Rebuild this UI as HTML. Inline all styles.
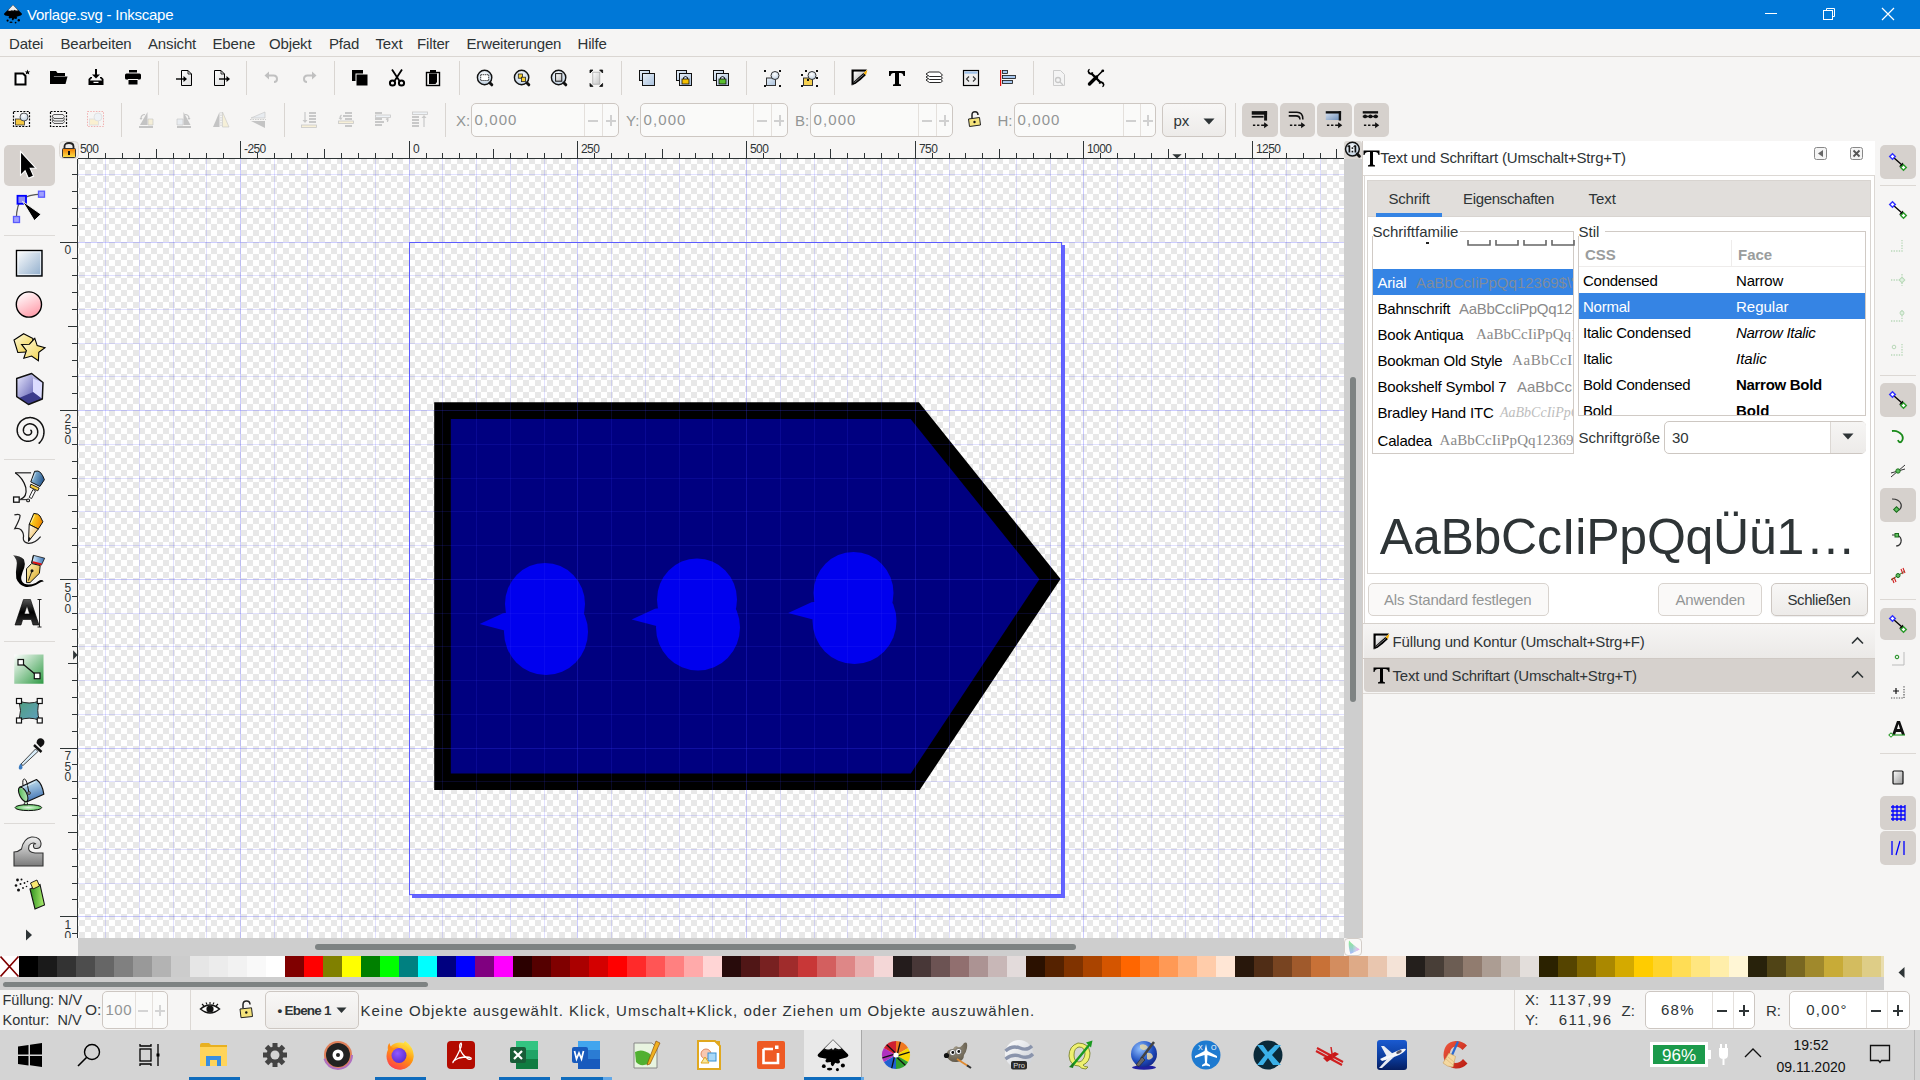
<!DOCTYPE html><html><head><meta charset="utf-8"><title>Vorlage.svg - Inkscape</title><style>html,body{margin:0;padding:0;}body{width:1920px;height:1080px;overflow:hidden;position:relative;background:#f6f5f4;font-family:"Liberation Sans",sans-serif;}</style></head><body>
<div style="position:absolute;left:0px;top:0px;width:1920px;height:29px;background:#0078d7;"></div>
<svg style="position:absolute;left:3px;top:4px;" width="20" height="20" viewBox="0 0 20 20"><defs><linearGradient id="lg_t" x1="0" y1="0" x2="0" y2="1"><stop offset="0" stop-color="#5a5a5a"/><stop offset="0.45" stop-color="#000"/></linearGradient></defs><path d="M10 0.8 L1.2 9.6 Q0.4 10.9 2.2 11.4 L6.2 12.2 Q4.8 13.8 6.4 14.4 L8.8 14.1 Q8.3 16.2 10 16.6 L11.3 14.6 Q13.3 15.6 14.2 14.1 L13.6 12.7 L17.8 11.4 Q19.6 10.9 18.8 9.6 Z" fill="url(#lg_t)"/><path d="M10 1.2 L5 6.2 Q7.5 7.4 9.2 6 L10 7 L11.2 5.8 Q13 7.2 15 6.2 Z" fill="#fff" opacity="0.92"/><circle cx="4.6" cy="16.6" r="1.1" fill="#000"/><circle cx="15.8" cy="16.2" r="1.2" fill="#000"/><circle cx="12.6" cy="18.6" r="0.9" fill="#000"/><ellipse cx="8" cy="18.3" rx="1.6" ry="0.8" fill="#000"/></svg>
<div style="position:absolute;top:7.30px;font-size:15px;line-height:15px;color:#ffffff;font-family:'Liberation Sans', sans-serif;white-space:nowrap;left:27px;letter-spacing:-0.25px;">Vorlage.svg - Inkscape</div>
<div style="position:absolute;left:1765px;top:13px;width:12px;height:1px;background:#fff;"></div>
<svg style="position:absolute;left:1820px;top:6px;" width="18" height="16" viewBox="0 0 18 16"><rect x="3.5" y="4.5" width="9" height="9" fill="none" stroke="#fff" stroke-width="1"/><path d="M6.5 4.5 V2.5 H14.5 V10.5 H12.5" fill="none" stroke="#fff" stroke-width="1"/></svg>
<svg style="position:absolute;left:1881px;top:7px;" width="14" height="14" viewBox="0 0 14 14"><path d="M1 1 L13 13 M13 1 L1 13" stroke="#fff" stroke-width="1.2"/></svg>
<div style="position:absolute;left:0px;top:56px;width:1920px;height:1px;background:#dad6d2;"></div>
<div style="position:absolute;top:36.30px;font-size:15px;line-height:15px;color:#2e3436;font-family:'Liberation Sans', sans-serif;white-space:nowrap;left:9px;letter-spacing:-0.15px;">Datei</div>
<div style="position:absolute;top:36.30px;font-size:15px;line-height:15px;color:#2e3436;font-family:'Liberation Sans', sans-serif;white-space:nowrap;left:60.5px;letter-spacing:-0.15px;">Bearbeiten</div>
<div style="position:absolute;top:36.30px;font-size:15px;line-height:15px;color:#2e3436;font-family:'Liberation Sans', sans-serif;white-space:nowrap;left:148px;letter-spacing:-0.15px;">Ansicht</div>
<div style="position:absolute;top:36.30px;font-size:15px;line-height:15px;color:#2e3436;font-family:'Liberation Sans', sans-serif;white-space:nowrap;left:212.5px;letter-spacing:-0.15px;">Ebene</div>
<div style="position:absolute;top:36.30px;font-size:15px;line-height:15px;color:#2e3436;font-family:'Liberation Sans', sans-serif;white-space:nowrap;left:269px;letter-spacing:-0.15px;">Objekt</div>
<div style="position:absolute;top:36.30px;font-size:15px;line-height:15px;color:#2e3436;font-family:'Liberation Sans', sans-serif;white-space:nowrap;left:329px;letter-spacing:-0.15px;">Pfad</div>
<div style="position:absolute;top:36.30px;font-size:15px;line-height:15px;color:#2e3436;font-family:'Liberation Sans', sans-serif;white-space:nowrap;left:375.5px;letter-spacing:-0.15px;">Text</div>
<div style="position:absolute;top:36.30px;font-size:15px;line-height:15px;color:#2e3436;font-family:'Liberation Sans', sans-serif;white-space:nowrap;left:417px;letter-spacing:-0.15px;">Filter</div>
<div style="position:absolute;top:36.30px;font-size:15px;line-height:15px;color:#2e3436;font-family:'Liberation Sans', sans-serif;white-space:nowrap;left:466.5px;letter-spacing:-0.15px;">Erweiterungen</div>
<div style="position:absolute;top:36.30px;font-size:15px;line-height:15px;color:#2e3436;font-family:'Liberation Sans', sans-serif;white-space:nowrap;left:577.5px;letter-spacing:-0.15px;">Hilfe</div>
<svg style="position:absolute;left:78px;top:159px;" width="1266" height="779" viewBox="0 0 1266 779"><defs><pattern id="chk" patternUnits="userSpaceOnUse" x="1" y="158" width="12" height="12"><rect width="12" height="12" fill="#ffffff"/><rect x="0" y="0" width="6" height="6" fill="#e8e8e8"/><rect x="6" y="6" width="6" height="6" fill="#e8e8e8"/></pattern></defs><g transform="translate(-78,-159)"><rect x="78" y="159" width="1266" height="779" fill="url(#chk)"/><polygon points="434.2,402.2 918.9,402.2 1060.6,579 919.7,789.9 434.2,789.9" fill="#000"/><polygon points="450.8,419 910.6,419 1039.4,579.2 910.8,773.4 450.8,773.4" fill="#000080"/><g transform="translate(0,0)"><g fill="#0000ee"><ellipse cx="545" cy="604" rx="40" ry="41"/><ellipse cx="546" cy="632" rx="42" ry="43"/><polygon points="479.7,624.1 503,613.2 512,612 512,631 504.5,630.6"/></g></g><g transform="translate(152,-4.5)"><g fill="#0000ee"><ellipse cx="545" cy="604" rx="40" ry="41"/><ellipse cx="546" cy="632" rx="42" ry="43"/><polygon points="479.7,624.1 503,613.2 512,612 512,631 504.5,630.6"/></g></g><g transform="translate(308.5,-11)"><g fill="#0000ee"><ellipse cx="545" cy="604" rx="40" ry="41"/><ellipse cx="546" cy="632" rx="42" ry="43"/><polygon points="479.7,624.1 503,613.2 512,612 512,631 504.5,630.6"/></g></g><rect x="105" y="159" width="1" height="779" fill="#3f3fff" fill-opacity="0.15"/><rect x="139" y="159" width="1" height="779" fill="#3f3fff" fill-opacity="0.15"/><rect x="173" y="159" width="1" height="779" fill="#3f3fff" fill-opacity="0.15"/><rect x="206" y="159" width="1" height="779" fill="#3f3fff" fill-opacity="0.15"/><rect x="240" y="159" width="1" height="779" fill="#3f3fff" fill-opacity="0.26"/><rect x="274" y="159" width="1" height="779" fill="#3f3fff" fill-opacity="0.15"/><rect x="307" y="159" width="1" height="779" fill="#3f3fff" fill-opacity="0.15"/><rect x="341" y="159" width="1" height="779" fill="#3f3fff" fill-opacity="0.15"/><rect x="375" y="159" width="1" height="779" fill="#3f3fff" fill-opacity="0.15"/><rect x="409" y="159" width="1" height="779" fill="#3f3fff" fill-opacity="0.26"/><rect x="442" y="159" width="1" height="779" fill="#3f3fff" fill-opacity="0.15"/><rect x="476" y="159" width="1" height="779" fill="#3f3fff" fill-opacity="0.15"/><rect x="510" y="159" width="1" height="779" fill="#3f3fff" fill-opacity="0.15"/><rect x="544" y="159" width="1" height="779" fill="#3f3fff" fill-opacity="0.15"/><rect x="577" y="159" width="1" height="779" fill="#3f3fff" fill-opacity="0.26"/><rect x="611" y="159" width="1" height="779" fill="#3f3fff" fill-opacity="0.15"/><rect x="645" y="159" width="1" height="779" fill="#3f3fff" fill-opacity="0.15"/><rect x="679" y="159" width="1" height="779" fill="#3f3fff" fill-opacity="0.15"/><rect x="712" y="159" width="1" height="779" fill="#3f3fff" fill-opacity="0.15"/><rect x="746" y="159" width="1" height="779" fill="#3f3fff" fill-opacity="0.26"/><rect x="780" y="159" width="1" height="779" fill="#3f3fff" fill-opacity="0.15"/><rect x="814" y="159" width="1" height="779" fill="#3f3fff" fill-opacity="0.15"/><rect x="847" y="159" width="1" height="779" fill="#3f3fff" fill-opacity="0.15"/><rect x="881" y="159" width="1" height="779" fill="#3f3fff" fill-opacity="0.15"/><rect x="915" y="159" width="1" height="779" fill="#3f3fff" fill-opacity="0.26"/><rect x="949" y="159" width="1" height="779" fill="#3f3fff" fill-opacity="0.15"/><rect x="982" y="159" width="1" height="779" fill="#3f3fff" fill-opacity="0.15"/><rect x="1016" y="159" width="1" height="779" fill="#3f3fff" fill-opacity="0.15"/><rect x="1050" y="159" width="1" height="779" fill="#3f3fff" fill-opacity="0.15"/><rect x="1083" y="159" width="1" height="779" fill="#3f3fff" fill-opacity="0.26"/><rect x="1117" y="159" width="1" height="779" fill="#3f3fff" fill-opacity="0.15"/><rect x="1151" y="159" width="1" height="779" fill="#3f3fff" fill-opacity="0.15"/><rect x="1185" y="159" width="1" height="779" fill="#3f3fff" fill-opacity="0.15"/><rect x="1218" y="159" width="1" height="779" fill="#3f3fff" fill-opacity="0.15"/><rect x="1252" y="159" width="1" height="779" fill="#3f3fff" fill-opacity="0.26"/><rect x="1286" y="159" width="1" height="779" fill="#3f3fff" fill-opacity="0.15"/><rect x="1320" y="159" width="1" height="779" fill="#3f3fff" fill-opacity="0.15"/><rect x="78" y="174" width="1266" height="1" fill="#3f3fff" fill-opacity="0.15"/><rect x="78" y="208" width="1266" height="1" fill="#3f3fff" fill-opacity="0.15"/><rect x="78" y="242" width="1266" height="1" fill="#3f3fff" fill-opacity="0.26"/><rect x="78" y="275" width="1266" height="1" fill="#3f3fff" fill-opacity="0.15"/><rect x="78" y="309" width="1266" height="1" fill="#3f3fff" fill-opacity="0.15"/><rect x="78" y="343" width="1266" height="1" fill="#3f3fff" fill-opacity="0.15"/><rect x="78" y="376" width="1266" height="1" fill="#3f3fff" fill-opacity="0.15"/><rect x="78" y="410" width="1266" height="1" fill="#3f3fff" fill-opacity="0.26"/><rect x="78" y="444" width="1266" height="1" fill="#3f3fff" fill-opacity="0.15"/><rect x="78" y="478" width="1266" height="1" fill="#3f3fff" fill-opacity="0.15"/><rect x="78" y="511" width="1266" height="1" fill="#3f3fff" fill-opacity="0.15"/><rect x="78" y="545" width="1266" height="1" fill="#3f3fff" fill-opacity="0.15"/><rect x="78" y="579" width="1266" height="1" fill="#3f3fff" fill-opacity="0.26"/><rect x="78" y="613" width="1266" height="1" fill="#3f3fff" fill-opacity="0.15"/><rect x="78" y="646" width="1266" height="1" fill="#3f3fff" fill-opacity="0.15"/><rect x="78" y="680" width="1266" height="1" fill="#3f3fff" fill-opacity="0.15"/><rect x="78" y="714" width="1266" height="1" fill="#3f3fff" fill-opacity="0.15"/><rect x="78" y="748" width="1266" height="1" fill="#3f3fff" fill-opacity="0.26"/><rect x="78" y="781" width="1266" height="1" fill="#3f3fff" fill-opacity="0.15"/><rect x="78" y="815" width="1266" height="1" fill="#3f3fff" fill-opacity="0.15"/><rect x="78" y="849" width="1266" height="1" fill="#3f3fff" fill-opacity="0.15"/><rect x="78" y="883" width="1266" height="1" fill="#3f3fff" fill-opacity="0.15"/><rect x="78" y="916" width="1266" height="1" fill="#3f3fff" fill-opacity="0.26"/><rect x="409" y="242" width="653" height="1" fill="#5c5cff"/><rect x="409" y="242" width="1" height="653" fill="#5c5cff"/><rect x="1061" y="242" width="1" height="656" fill="#5c5cff"/><rect x="409" y="894" width="656" height="1" fill="#5c5cff"/><rect x="1062" y="245" width="3" height="653" fill="#6464ff"/><rect x="412" y="895" width="653" height="3" fill="#6464ff"/></g></svg>
<svg style="position:absolute;left:0px;top:0px;pointer-events:none;" width="1920" height="1080" viewBox="0 0 1920 1080"><rect x="78" y="158" width="1266" height="1" fill="#2e3436"/><rect x="88" y="153" width="1" height="5" fill="#2e3436"/><rect x="105" y="153" width="1" height="5" fill="#2e3436"/><rect x="122" y="153" width="1" height="5" fill="#2e3436"/><rect x="139" y="153" width="1" height="5" fill="#2e3436"/><rect x="156" y="149" width="1" height="9" fill="#2e3436"/><rect x="173" y="153" width="1" height="5" fill="#2e3436"/><rect x="189" y="153" width="1" height="5" fill="#2e3436"/><rect x="206" y="153" width="1" height="5" fill="#2e3436"/><rect x="223" y="153" width="1" height="5" fill="#2e3436"/><rect x="240" y="141" width="1" height="17" fill="#2e3436"/><rect x="257" y="153" width="1" height="5" fill="#2e3436"/><rect x="274" y="153" width="1" height="5" fill="#2e3436"/><rect x="291" y="153" width="1" height="5" fill="#2e3436"/><rect x="307" y="153" width="1" height="5" fill="#2e3436"/><rect x="324" y="149" width="1" height="9" fill="#2e3436"/><rect x="341" y="153" width="1" height="5" fill="#2e3436"/><rect x="358" y="153" width="1" height="5" fill="#2e3436"/><rect x="375" y="153" width="1" height="5" fill="#2e3436"/><rect x="392" y="153" width="1" height="5" fill="#2e3436"/><rect x="409" y="141" width="1" height="17" fill="#2e3436"/><rect x="426" y="153" width="1" height="5" fill="#2e3436"/><rect x="442" y="153" width="1" height="5" fill="#2e3436"/><rect x="459" y="153" width="1" height="5" fill="#2e3436"/><rect x="476" y="153" width="1" height="5" fill="#2e3436"/><rect x="493" y="149" width="1" height="9" fill="#2e3436"/><rect x="510" y="153" width="1" height="5" fill="#2e3436"/><rect x="527" y="153" width="1" height="5" fill="#2e3436"/><rect x="544" y="153" width="1" height="5" fill="#2e3436"/><rect x="561" y="153" width="1" height="5" fill="#2e3436"/><rect x="577" y="141" width="1" height="17" fill="#2e3436"/><rect x="594" y="153" width="1" height="5" fill="#2e3436"/><rect x="611" y="153" width="1" height="5" fill="#2e3436"/><rect x="628" y="153" width="1" height="5" fill="#2e3436"/><rect x="645" y="153" width="1" height="5" fill="#2e3436"/><rect x="662" y="149" width="1" height="9" fill="#2e3436"/><rect x="679" y="153" width="1" height="5" fill="#2e3436"/><rect x="695" y="153" width="1" height="5" fill="#2e3436"/><rect x="712" y="153" width="1" height="5" fill="#2e3436"/><rect x="729" y="153" width="1" height="5" fill="#2e3436"/><rect x="746" y="141" width="1" height="17" fill="#2e3436"/><rect x="763" y="153" width="1" height="5" fill="#2e3436"/><rect x="780" y="153" width="1" height="5" fill="#2e3436"/><rect x="797" y="153" width="1" height="5" fill="#2e3436"/><rect x="814" y="153" width="1" height="5" fill="#2e3436"/><rect x="830" y="149" width="1" height="9" fill="#2e3436"/><rect x="847" y="153" width="1" height="5" fill="#2e3436"/><rect x="864" y="153" width="1" height="5" fill="#2e3436"/><rect x="881" y="153" width="1" height="5" fill="#2e3436"/><rect x="898" y="153" width="1" height="5" fill="#2e3436"/><rect x="915" y="141" width="1" height="17" fill="#2e3436"/><rect x="932" y="153" width="1" height="5" fill="#2e3436"/><rect x="949" y="153" width="1" height="5" fill="#2e3436"/><rect x="965" y="153" width="1" height="5" fill="#2e3436"/><rect x="982" y="153" width="1" height="5" fill="#2e3436"/><rect x="999" y="149" width="1" height="9" fill="#2e3436"/><rect x="1016" y="153" width="1" height="5" fill="#2e3436"/><rect x="1033" y="153" width="1" height="5" fill="#2e3436"/><rect x="1050" y="153" width="1" height="5" fill="#2e3436"/><rect x="1067" y="153" width="1" height="5" fill="#2e3436"/><rect x="1083" y="141" width="1" height="17" fill="#2e3436"/><rect x="1100" y="153" width="1" height="5" fill="#2e3436"/><rect x="1117" y="153" width="1" height="5" fill="#2e3436"/><rect x="1134" y="153" width="1" height="5" fill="#2e3436"/><rect x="1151" y="153" width="1" height="5" fill="#2e3436"/><rect x="1168" y="149" width="1" height="9" fill="#2e3436"/><rect x="1185" y="153" width="1" height="5" fill="#2e3436"/><rect x="1202" y="153" width="1" height="5" fill="#2e3436"/><rect x="1218" y="153" width="1" height="5" fill="#2e3436"/><rect x="1235" y="153" width="1" height="5" fill="#2e3436"/><rect x="1252" y="141" width="1" height="17" fill="#2e3436"/><rect x="1269" y="153" width="1" height="5" fill="#2e3436"/><rect x="1286" y="153" width="1" height="5" fill="#2e3436"/><rect x="1303" y="153" width="1" height="5" fill="#2e3436"/><rect x="1320" y="153" width="1" height="5" fill="#2e3436"/><rect x="1336" y="149" width="1" height="9" fill="#2e3436"/><rect x="77" y="159" width="1" height="779" fill="#2e3436"/><rect x="72" y="174" width="5" height="1" fill="#2e3436"/><rect x="72" y="191" width="5" height="1" fill="#2e3436"/><rect x="72" y="208" width="5" height="1" fill="#2e3436"/><rect x="72" y="225" width="5" height="1" fill="#2e3436"/><rect x="60" y="242" width="17" height="1" fill="#2e3436"/><rect x="72" y="258" width="5" height="1" fill="#2e3436"/><rect x="72" y="275" width="5" height="1" fill="#2e3436"/><rect x="72" y="292" width="5" height="1" fill="#2e3436"/><rect x="72" y="309" width="5" height="1" fill="#2e3436"/><rect x="68" y="326" width="9" height="1" fill="#2e3436"/><rect x="72" y="343" width="5" height="1" fill="#2e3436"/><rect x="72" y="360" width="5" height="1" fill="#2e3436"/><rect x="72" y="376" width="5" height="1" fill="#2e3436"/><rect x="72" y="393" width="5" height="1" fill="#2e3436"/><rect x="60" y="410" width="17" height="1" fill="#2e3436"/><rect x="72" y="427" width="5" height="1" fill="#2e3436"/><rect x="72" y="444" width="5" height="1" fill="#2e3436"/><rect x="72" y="461" width="5" height="1" fill="#2e3436"/><rect x="72" y="478" width="5" height="1" fill="#2e3436"/><rect x="68" y="495" width="9" height="1" fill="#2e3436"/><rect x="72" y="511" width="5" height="1" fill="#2e3436"/><rect x="72" y="528" width="5" height="1" fill="#2e3436"/><rect x="72" y="545" width="5" height="1" fill="#2e3436"/><rect x="72" y="562" width="5" height="1" fill="#2e3436"/><rect x="60" y="579" width="17" height="1" fill="#2e3436"/><rect x="72" y="596" width="5" height="1" fill="#2e3436"/><rect x="72" y="613" width="5" height="1" fill="#2e3436"/><rect x="72" y="629" width="5" height="1" fill="#2e3436"/><rect x="72" y="646" width="5" height="1" fill="#2e3436"/><rect x="68" y="663" width="9" height="1" fill="#2e3436"/><rect x="72" y="680" width="5" height="1" fill="#2e3436"/><rect x="72" y="697" width="5" height="1" fill="#2e3436"/><rect x="72" y="714" width="5" height="1" fill="#2e3436"/><rect x="72" y="731" width="5" height="1" fill="#2e3436"/><rect x="60" y="748" width="17" height="1" fill="#2e3436"/><rect x="72" y="764" width="5" height="1" fill="#2e3436"/><rect x="72" y="781" width="5" height="1" fill="#2e3436"/><rect x="72" y="798" width="5" height="1" fill="#2e3436"/><rect x="72" y="815" width="5" height="1" fill="#2e3436"/><rect x="68" y="832" width="9" height="1" fill="#2e3436"/><rect x="72" y="849" width="5" height="1" fill="#2e3436"/><rect x="72" y="866" width="5" height="1" fill="#2e3436"/><rect x="72" y="883" width="5" height="1" fill="#2e3436"/><rect x="72" y="899" width="5" height="1" fill="#2e3436"/><rect x="60" y="916" width="17" height="1" fill="#2e3436"/><rect x="72" y="933" width="5" height="1" fill="#2e3436"/><path d="M1172.3 154.2 H1181.7 L1177 158.6 Z" fill="#2e3436"/><path d="M73.1 650.3 V659.7 L77.6 655 Z" fill="#2e3436"/></svg>
<div style="position:absolute;top:142.84px;font-size:12px;line-height:12px;color:#2e3436;font-family:'Liberation Sans', sans-serif;white-space:nowrap;left:80px;letter-spacing:-0.6px;">500</div>
<div style="position:absolute;top:142.84px;font-size:12px;line-height:12px;color:#2e3436;font-family:'Liberation Sans', sans-serif;white-space:nowrap;left:244px;letter-spacing:-0.6px;">-250</div>
<div style="position:absolute;top:142.84px;font-size:12px;line-height:12px;color:#2e3436;font-family:'Liberation Sans', sans-serif;white-space:nowrap;left:413px;letter-spacing:-0.6px;">0</div>
<div style="position:absolute;top:142.84px;font-size:12px;line-height:12px;color:#2e3436;font-family:'Liberation Sans', sans-serif;white-space:nowrap;left:581px;letter-spacing:-0.6px;">250</div>
<div style="position:absolute;top:142.84px;font-size:12px;line-height:12px;color:#2e3436;font-family:'Liberation Sans', sans-serif;white-space:nowrap;left:750px;letter-spacing:-0.6px;">500</div>
<div style="position:absolute;top:142.84px;font-size:12px;line-height:12px;color:#2e3436;font-family:'Liberation Sans', sans-serif;white-space:nowrap;left:919px;letter-spacing:-0.6px;">750</div>
<div style="position:absolute;top:142.84px;font-size:12px;line-height:12px;color:#2e3436;font-family:'Liberation Sans', sans-serif;white-space:nowrap;left:1087px;letter-spacing:-0.6px;">1000</div>
<div style="position:absolute;top:142.84px;font-size:12px;line-height:12px;color:#2e3436;font-family:'Liberation Sans', sans-serif;white-space:nowrap;left:1256px;letter-spacing:-0.6px;">1250</div>
<div style="position:absolute;left:0;top:159px;width:77px;height:779px;overflow:hidden;">
<div style="position:absolute;top:85.34px;font-size:12px;line-height:12px;color:#2e3436;font-family:'Liberation Sans', sans-serif;white-space:nowrap;left:64.5px;">0</div>
<div style="position:absolute;top:254.03px;font-size:12px;line-height:12px;color:#2e3436;font-family:'Liberation Sans', sans-serif;white-space:nowrap;left:64.5px;">2</div>
<div style="position:absolute;top:264.53px;font-size:12px;line-height:12px;color:#2e3436;font-family:'Liberation Sans', sans-serif;white-space:nowrap;left:64.5px;">5</div>
<div style="position:absolute;top:275.03px;font-size:12px;line-height:12px;color:#2e3436;font-family:'Liberation Sans', sans-serif;white-space:nowrap;left:64.5px;">0</div>
<div style="position:absolute;top:422.72px;font-size:12px;line-height:12px;color:#2e3436;font-family:'Liberation Sans', sans-serif;white-space:nowrap;left:64.5px;">5</div>
<div style="position:absolute;top:433.22px;font-size:12px;line-height:12px;color:#2e3436;font-family:'Liberation Sans', sans-serif;white-space:nowrap;left:64.5px;">0</div>
<div style="position:absolute;top:443.72px;font-size:12px;line-height:12px;color:#2e3436;font-family:'Liberation Sans', sans-serif;white-space:nowrap;left:64.5px;">0</div>
<div style="position:absolute;top:591.41px;font-size:12px;line-height:12px;color:#2e3436;font-family:'Liberation Sans', sans-serif;white-space:nowrap;left:64.5px;">7</div>
<div style="position:absolute;top:601.91px;font-size:12px;line-height:12px;color:#2e3436;font-family:'Liberation Sans', sans-serif;white-space:nowrap;left:64.5px;">5</div>
<div style="position:absolute;top:612.41px;font-size:12px;line-height:12px;color:#2e3436;font-family:'Liberation Sans', sans-serif;white-space:nowrap;left:64.5px;">0</div>
<div style="position:absolute;top:760.10px;font-size:12px;line-height:12px;color:#2e3436;font-family:'Liberation Sans', sans-serif;white-space:nowrap;left:64.5px;">1</div>
<div style="position:absolute;top:770.60px;font-size:12px;line-height:12px;color:#2e3436;font-family:'Liberation Sans', sans-serif;white-space:nowrap;left:64.5px;">0</div>
<div style="position:absolute;top:781.10px;font-size:12px;line-height:12px;color:#2e3436;font-family:'Liberation Sans', sans-serif;white-space:nowrap;left:64.5px;">0</div>
<div style="position:absolute;top:791.60px;font-size:12px;line-height:12px;color:#2e3436;font-family:'Liberation Sans', sans-serif;white-space:nowrap;left:64.5px;">0</div>
</div>
<svg style="position:absolute;left:59px;top:141px;" width="20" height="18" viewBox="0 0 20 18">
<rect x="0.5" y="0.5" width="19" height="17" rx="4" fill="#efedeb" stroke="#dcd8d4"/>
<path d="M5.5 8 V5.5 Q5.5 2 10 2 Q14.5 2 14.5 5.5 V8" fill="none" stroke="#222" stroke-width="1.8"/>
<rect x="3.5" y="7.5" width="13" height="9" rx="1" fill="url(#lockg)" stroke="#333"/>
<defs><linearGradient id="lockg" x1="0" y1="0" x2="0" y2="1"><stop offset="0" stop-color="#f07a00"/><stop offset="1" stop-color="#fce34a"/></linearGradient></defs>
<rect x="9" y="10" width="2" height="4" fill="#111"/>
</svg>
<svg style="position:absolute;left:1344px;top:141px;" width="18" height="18" viewBox="0 0 18 18"><rect x="0" y="0" width="18" height="18" rx="3" fill="#dcd8d4"/><defs><radialGradient id="z11" cx="0.45" cy="0.4" r="0.7"><stop offset="0" stop-color="#ffffff"/><stop offset="1" stop-color="#b4c8dc"/></radialGradient></defs><circle cx="8.4" cy="8.1" r="6.9" fill="url(#z11)" stroke="#111" stroke-width="1.5"/><path d="M13.2 13 L15.4 15.2" stroke="#111" stroke-width="3" stroke-linecap="round"/><path d="M5.4 4.6 V11.6 M11.4 4.6 V11.6" stroke="#111" stroke-width="1.7"/><path d="M3.6 5.8 L5.5 4.4 M9.6 5.8 L11.5 4.4" stroke="#111" stroke-width="1.2"/><rect x="7.6" y="6.3" width="1.6" height="1.6" fill="#111"/><rect x="7.6" y="9.8" width="1.6" height="1.6" fill="#111"/></svg>
<div style="position:absolute;left:1344px;top:159px;width:18px;height:779px;background:#cecece;"></div>
<div style="position:absolute;left:1362px;top:141px;width:1px;height:797px;background:#d3cdc8;"></div>
<div style="position:absolute;left:1350px;top:377px;width:6px;height:325px;background:#7e8383;border-radius:3px;"></div>
<div style="position:absolute;left:78px;top:938px;width:1266px;height:18px;background:#cecece;"></div>
<div style="position:absolute;left:315px;top:944px;width:761px;height:6px;background:#7e8383;border-radius:3px;"></div>
<svg style="position:absolute;left:1344px;top:938px;" width="18" height="18" viewBox="0 0 18 18"><rect x="0.5" y="0.5" width="17" height="17" rx="3.5" fill="#faf9f8" stroke="#d3cdc8"/><defs><linearGradient id="cm1" x1="0" y1="0" x2="0" y2="1"><stop offset="0" stop-color="#8af08a"/><stop offset="1" stop-color="#a8b8ff"/></linearGradient><linearGradient id="cm2" x1="0" y1="0" x2="1" y2="0"><stop offset="0.35" stop-color="#ffffff" stop-opacity="0"/><stop offset="1" stop-color="#ff90f0"/></linearGradient></defs><path d="M5 2.5 Q8 6 15.5 11.5 L6.5 16 Q4 9 5 2.5 Z" fill="url(#cm1)"/><path d="M5 2.5 Q8 6 15.5 11.5 L6.5 16 Q4 9 5 2.5 Z" fill="url(#cm2)"/></svg>
<svg style="position:absolute;left:12px;top:68px;" width="20" height="20" viewBox="0 0 20 20"><path d="M3.5 5.5 H11 L13.5 8 V16.5 H3.5 Z" fill="#fff" stroke="#000" stroke-width="2"/><path d="M15.5 1.5 L16.3 3.4 L18.3 3.4 L16.8 4.6 L17.3 6.6 L15.5 5.4 L13.7 6.6 L14.2 4.6 L12.7 3.4 L14.7 3.4 Z" fill="#000"/></svg>
<svg style="position:absolute;left:49px;top:68px;" width="20" height="20" viewBox="0 0 20 20"><path d="M1 3 H7 L8.5 5 H16 V8 H5 L3 16 H1 Z" fill="#000"/><path d="M4 8.5 H18.5 L16.5 16 H2 Z" fill="#000"/></svg>
<svg style="position:absolute;left:86px;top:68px;" width="20" height="20" viewBox="0 0 20 20"><path d="M10 1 V9" stroke="#000" stroke-width="2"/><path d="M6 6.5 L10 10.5 L14 6.5 Z" fill="#000"/><path d="M2.5 11 L4.5 9 H6 V10.5 H5 L4 12.5 H16 L15 10.5 H14 V9 H15.5 L17.5 11 V17 H2.5 Z" fill="#000"/><rect x="7.5" y="13.8" width="5" height="1.2" fill="#fff"/></svg>
<svg style="position:absolute;left:123px;top:68px;" width="20" height="20" viewBox="0 0 20 20"><rect x="6" y="2" width="8" height="2.5" fill="#000"/><rect x="2" y="5.5" width="16" height="6" rx="1.5" fill="#000"/><rect x="5.5" y="10.5" width="9" height="6" fill="#000"/><rect x="5" y="11" width="10" height="1" fill="#f6f5f4"/></svg>
<div style="position:absolute;left:158px;top:61px;width:1px;height:34px;background:#d9d5d1;"></div>
<svg style="position:absolute;left:175px;top:68px;" width="20" height="20" viewBox="0 0 20 20"><defs><linearGradient id="docg" x1="0" y1="0" x2="1" y2="1"><stop offset="0" stop-color="#fff"/><stop offset="1" stop-color="#ddd"/></linearGradient></defs><path d="M6.5 2.5 H13 L16.5 6 V17.5 H6.5 Z" fill="url(#docg)" stroke="#000"/><path d="M13 2.5 V6 H16.5" fill="none" stroke="#000" stroke-width="0.8"/><path d="M1 11 H9" stroke="#000" stroke-width="1.4"/><path d="M8.5 8 L12 11 L8.5 14 Z" fill="#000"/></svg>
<svg style="position:absolute;left:211px;top:68px;" width="20" height="20" viewBox="0 0 20 20"><path d="M3.5 2.5 H10 L13.5 6 V17.5 H3.5 Z" fill="url(#docg)" stroke="#000"/><path d="M10 2.5 V6 H13.5" fill="none" stroke="#000" stroke-width="0.8"/><path d="M8 11 H16" stroke="#000" stroke-width="1.4"/><path d="M15.5 8 L19 11 L15.5 14 Z" fill="#000"/></svg>
<div style="position:absolute;left:246px;top:61px;width:1px;height:34px;background:#d9d5d1;"></div>
<svg style="position:absolute;left:262px;top:68px;" width="20" height="20" viewBox="0 0 20 20"><path d="M6 7.5 H11.5 Q15 7.5 15 11 Q15 14 12 14" fill="none" stroke="#c0c0c0" stroke-width="2"/><path d="M2.5 7.5 L7 3.5 V11.5 Z" fill="#c0c0c0"/></svg>
<svg style="position:absolute;left:299px;top:68px;" width="20" height="20" viewBox="0 0 20 20"><path d="M14 7.5 H8.5 Q5 7.5 5 11 Q5 14 8 14" fill="none" stroke="#c0c0c0" stroke-width="2"/><path d="M17.5 7.5 L13 3.5 V11.5 Z" fill="#c0c0c0"/></svg>
<div style="position:absolute;left:334px;top:61px;width:1px;height:34px;background:#d9d5d1;"></div>
<svg style="position:absolute;left:350px;top:68px;" width="20" height="20" viewBox="0 0 20 20"><rect x="2" y="2" width="11" height="11" fill="#000"/><rect x="6" y="6" width="12" height="12" fill="#000" stroke="#f6f5f4" stroke-width="1"/></svg>
<svg style="position:absolute;left:387px;top:68px;" width="20" height="20" viewBox="0 0 20 20"><path d="M5 1.5 L12.5 13 M15 1.5 L7.5 13" stroke="#000" stroke-width="1.8"/><circle cx="5.5" cy="15" r="2.6" fill="none" stroke="#000" stroke-width="2"/><circle cx="14.5" cy="15" r="2.6" fill="none" stroke="#000" stroke-width="2"/></svg>
<svg style="position:absolute;left:423px;top:68px;" width="20" height="20" viewBox="0 0 20 20"><rect x="3.5" y="4.5" width="13" height="13" fill="none" stroke="#000" stroke-width="1.4"/><rect x="7" y="2" width="6" height="3" fill="#000"/><path d="M6 5.5 H14 V14 L12.5 16 H6 Z" fill="#000"/></svg>
<div style="position:absolute;left:459px;top:61px;width:1px;height:34px;background:#d9d5d1;"></div>
<svg style="position:absolute;left:475px;top:68px;" width="20" height="20" viewBox="0 0 20 20"><defs><radialGradient id="zg" cx="0.45" cy="0.35" r="0.75"><stop offset="0" stop-color="#ffffff"/><stop offset="1" stop-color="#b4c8dc"/></radialGradient></defs><circle cx="9.6" cy="9.5" r="7.2" fill="url(#zg)" stroke="#111" stroke-width="1.4"/><rect x="5.7" y="6.7" width="8" height="5.8" fill="#fff" stroke="#111" stroke-width="1" stroke-dasharray="1.1 0.9"/><path d="M15 15 L16.8 16.8" stroke="#111" stroke-width="3" stroke-linecap="round"/></svg>
<svg style="position:absolute;left:512px;top:68px;" width="20" height="20" viewBox="0 0 20 20"><defs><radialGradient id="zg2" cx="0.45" cy="0.35" r="0.75"><stop offset="0" stop-color="#ffffff"/><stop offset="1" stop-color="#b4c8dc"/></radialGradient></defs><circle cx="9.6" cy="9.5" r="7.2" fill="url(#zg2)" stroke="#111" stroke-width="1.4"/><rect x="6.3" y="6" width="4.2" height="4.2" fill="#f8d030" stroke="#222" stroke-width="0.8"/><rect x="9.4" y="9.2" width="4.2" height="4.4" fill="#f8d030" stroke="#222" stroke-width="0.8"/><path d="M15 15 L16.8 16.8" stroke="#111" stroke-width="3" stroke-linecap="round"/></svg>
<svg style="position:absolute;left:549px;top:68px;" width="20" height="20" viewBox="0 0 20 20"><defs><radialGradient id="zg3" cx="0.45" cy="0.35" r="0.75"><stop offset="0" stop-color="#ffffff"/><stop offset="1" stop-color="#b4c8dc"/></radialGradient></defs><circle cx="9.6" cy="9.5" r="7.2" fill="url(#zg3)" stroke="#111" stroke-width="1.4"/><defs><linearGradient id="zpg" x1="0" y1="0" x2="1" y2="1"><stop offset="0" stop-color="#fff"/><stop offset="1" stop-color="#bbb"/></linearGradient></defs><rect x="6.6" y="5.6" width="6.2" height="7.6" fill="url(#zpg)" stroke="#111" stroke-width="1"/><path d="M15 15 L16.8 16.8" stroke="#111" stroke-width="3" stroke-linecap="round"/></svg>
<svg style="position:absolute;left:586px;top:68px;" width="20" height="20" viewBox="0 0 20 20"><defs><linearGradient id="pgg" x1="0" y1="0" x2="1" y2="1"><stop offset="0" stop-color="#fff"/><stop offset="1" stop-color="#c4c4c4"/></linearGradient></defs><rect x="6.8" y="4.2" width="7" height="12" fill="url(#pgg)" stroke="#aaa" stroke-width="0.8"/><path d="M4 2 H7 L4 5 Z M16.6 2 H13.6 L16.6 5 Z M4 18.4 H7 L4 15.4 Z M16.6 18.4 H13.6 L16.6 15.4 Z" fill="#111" stroke="#111" stroke-width="0.8" stroke-linejoin="round"/></svg>
<div style="position:absolute;left:621px;top:61px;width:1px;height:34px;background:#d9d5d1;"></div>
<svg style="position:absolute;left:638px;top:69px;" width="20" height="20" viewBox="0 0 20 20"><defs><linearGradient id="sqg" x1="0" y1="0" x2="1" y2="1"><stop offset="0" stop-color="#e8f0f8"/><stop offset="1" stop-color="#a8c0dc"/></linearGradient></defs><rect x="1.5" y="1.5" width="10" height="10" fill="url(#sqg)" stroke="#111"/><rect x="4.5" y="4.5" width="12" height="12" fill="url(#sqg)" stroke="#111"/></svg>
<svg style="position:absolute;left:675px;top:69px;" width="20" height="20" viewBox="0 0 20 20"><rect x="1.5" y="1.5" width="10" height="10" fill="url(#sqg)" stroke="#111"/><rect x="4.5" y="4.5" width="12" height="12" fill="url(#sqg)" stroke="#111"/><rect x="7" y="10" width="7" height="5" fill="#f5c000" stroke="#111" stroke-width="0.8"/><path d="M8.5 10 V8.5 Q10.5 6.5 12.5 8.5 V10" fill="none" stroke="#111" stroke-width="1"/></svg>
<svg style="position:absolute;left:712px;top:69px;" width="20" height="20" viewBox="0 0 20 20"><rect x="1.5" y="1.5" width="10" height="10" fill="url(#sqg)" stroke="#111"/><rect x="4.5" y="4.5" width="12" height="12" fill="url(#sqg)" stroke="#111"/><rect x="7" y="10" width="7" height="5" fill="#5ac030" stroke="#111" stroke-width="0.8"/><path d="M8.5 10 V8.5 Q10.5 6.5 12.5 8.5 V10" fill="none" stroke="#111" stroke-width="1"/></svg>
<div style="position:absolute;left:746px;top:61px;width:1px;height:34px;background:#d9d5d1;"></div>
<svg style="position:absolute;left:763px;top:69px;" width="20" height="20" viewBox="0 0 20 20"><rect x="3.5" y="9" width="9" height="7.5" fill="url(#sqg)" stroke="#333"/><circle cx="12" cy="6.5" r="4" fill="url(#zg)" stroke="#333"/><path d="M1 1 H3 V3 H1 Z M16 1 H18 V3 H16 Z M1 16 H3 V18 H1 Z M16 16 H18 V18 H16 Z" fill="#111"/></svg>
<svg style="position:absolute;left:800px;top:69px;" width="20" height="20" viewBox="0 0 20 20"><rect x="3.5" y="9" width="9" height="7.5" fill="#f5d050" stroke="#333"/><circle cx="12" cy="6.5" r="4" fill="url(#zg)" stroke="#333"/><path d="M1 5 H3 V7 H1 Z M16 1 H18 V3 H16 Z M1 16 H3 V18 H1 Z M16 16 H18 V18 H16 Z M5 1 H7 V3 H5 Z M16 8 H18 V10 H16 Z M7 10 H9 V12 H7 Z" fill="#111"/></svg>
<div style="position:absolute;left:834px;top:61px;width:1px;height:34px;background:#d9d5d1;"></div>
<svg style="position:absolute;left:851px;top:69px;" width="17" height="17" viewBox="0 0 17 17"><defs><linearGradient id="FSG2" x1="0" y1="0" x2="1" y2="1"><stop offset="0" stop-color="#ffffff"/><stop offset="1" stop-color="#9a9a9a"/></linearGradient></defs><path d="M0.5 0.5 H16 L14 2.8 H2.8 V14 L0.5 16.5 Z" fill="#000"/><path d="M2.8 2.8 H14 L2.8 14 Z" fill="url(#FSG2)"/><path d="M0.8 16.5 L3 12.5 Q7 8.5 12.5 4 L15 6 Q10 11 5 14.5 Z" fill="#000"/><path d="M3.5 13.5 Q8 9.5 12.8 5.5" stroke="#fff" stroke-width="0.6" fill="none" opacity="0.8"/><path d="M12.5 4 L16.5 0.8 L15 6 Z" fill="#f7b000"/></svg>
<svg style="position:absolute;left:887px;top:68px;" width="20" height="20" viewBox="0 0 20 20"><path d="M2 3 H18 V8 H16.5 Q16 5 13.5 5 H12 V15.5 Q12 16.5 14 16.5 V18 H6 V16.5 Q8 16.5 8 15.5 V5 H6.5 Q4 5 3.5 8 H2 Z" fill="#000"/></svg>
<svg style="position:absolute;left:924px;top:68px;" width="20" height="20" viewBox="0 0 20 20"><g fill="#fff" stroke="#111" stroke-width="0.9" stroke-linejoin="round"><path d="M5 10 L15.5 10 L18.5 13.2 L16.5 14.5 L5.5 14.5 L2 12 Z"/><path d="M5 7 L15.5 7 L18.5 10.2 L16.5 11.5 L5.5 11.5 L2 9 Z"/><path d="M5 4 L15.5 4 L18.5 7.2 L16.5 8.5 L5.5 8.5 L2 6 Z"/></g></svg>
<svg style="position:absolute;left:961px;top:68px;" width="20" height="20" viewBox="0 0 20 20"><rect x="2.5" y="2.5" width="15" height="15" fill="#eee" stroke="#000" stroke-width="1.2"/><rect x="3.5" y="3.5" width="13" height="2.2" fill="#9ec0e8"/><path d="M8 8.5 L5.5 11 L8 13.5 M12 8.5 L14.5 11 L12 13.5" fill="none" stroke="#333" stroke-width="1.1"/></svg>
<svg style="position:absolute;left:998px;top:68px;" width="20" height="20" viewBox="0 0 20 20"><rect x="2" y="2" width="1.2" height="16" fill="#e01010"/><rect x="4.5" y="2.5" width="5" height="3" fill="#a8c8f0" stroke="#111" stroke-width="0.8"/><rect x="4.5" y="7.5" width="13" height="3" fill="#a8c8f0" stroke="#111" stroke-width="0.8"/><rect x="4.5" y="12.5" width="10" height="3" fill="#a8c8f0" stroke="#111" stroke-width="0.8"/></svg>
<div style="position:absolute;left:1033px;top:61px;width:1px;height:34px;background:#d9d5d1;"></div>
<svg style="position:absolute;left:1049px;top:68px;" width="20" height="20" viewBox="0 0 20 20"><path d="M4.5 2.5 H11.5 L15.5 6.5 V17.5 H4.5 Z" fill="#f4f4f4" stroke="#ccc"/><circle cx="9" cy="12" r="2.5" fill="none" stroke="#c8c8c8" stroke-width="1.3"/><path d="M11 14 L14 17" stroke="#c8c8c8" stroke-width="1.3"/></svg>
<svg style="position:absolute;left:1086px;top:68px;" width="20" height="20" viewBox="0 0 20 20"><path d="M16.5 3 L10 9.5" stroke="#000" stroke-width="1.6" stroke-linecap="round"/><path d="M10.5 9 L3.5 16" stroke="#000" stroke-width="3.4" stroke-linecap="round"/><circle cx="16.8" cy="2.8" r="1.4" fill="#000"/><path d="M5 5 L15 15" stroke="#000" stroke-width="2.4"/><path d="M1.5 3.5 Q1.5 1 4 0.8 L3 3.2 L4.8 5 L7.2 4 Q7 6.8 4.5 6.8 Q2 6.5 1.5 3.5 Z" fill="#000"/><path d="M18.5 16.5 Q18.5 19 16 19.2 L17 16.8 L15.2 15 L12.8 16 Q13 13.2 15.5 13.2 Q18 13.5 18.5 16.5 Z" fill="#000"/></svg>
<svg style="position:absolute;left:12px;top:110px;" width="20" height="20" viewBox="0 0 20 20"><rect x="1.5" y="1.5" width="16" height="15" fill="none" stroke="#000" stroke-width="1.2" stroke-dasharray="2 1.3"/><rect x="3.5" y="9" width="9" height="6" fill="#f5c842" stroke="#333" stroke-width="0.8"/><circle cx="12" cy="7" r="4" fill="url(#zg)" stroke="#333" stroke-width="0.8"/></svg>
<svg style="position:absolute;left:49px;top:110px;" width="20" height="20" viewBox="0 0 20 20"><rect x="1.5" y="1.5" width="16" height="15" fill="none" stroke="#000" stroke-width="1.2" stroke-dasharray="2 1.3"/><g fill="#eee" stroke="#333" stroke-width="0.8"><path d="M3 11 L5 9.5 H14 L15.5 11.5 L14 13.5 H5 Z"/><path d="M3 8.5 L5 7 H14 L15.5 9 L14 11 H5 Z"/><path d="M3 6 L5 4.5 H14 L15.5 6.5 L14 8.5 H5 Z"/></g></svg>
<svg style="position:absolute;left:86px;top:110px;" width="20" height="20" viewBox="0 0 20 20"><rect x="1.5" y="1.5" width="16" height="15" fill="none" stroke="#f0a0a0" stroke-width="0.8" stroke-dasharray="1.5 1.3"/><rect x="3.5" y="9" width="9" height="6" fill="#faf0d0" stroke="#ddd" stroke-width="0.8"/><circle cx="12" cy="7" r="4" fill="#eef2f6" stroke="#ddd" stroke-width="0.8"/></svg>
<div style="position:absolute;left:121px;top:103px;width:1px;height:34px;background:#d9d5d1;"></div>
<svg style="position:absolute;left:137px;top:110px;" width="20" height="20" viewBox="0 0 20 20"><path d="M10.5 2 L10.5 15 H3 Z" fill="#c4c4c4"/><path d="M11 9 L16 9 V15 H11 Z" fill="#f4eed8" stroke="#c4c4c4" stroke-width="0.6"/><path d="M2 16 H16 V18 H2 Z" fill="#c4c4c4"/><path d="M8 4.5 Q4 4.5 4 8.5" fill="none" stroke="#c4c4c4" stroke-width="1.2"/><path d="M2.5 8 L4 10 L5.5 8 Z" fill="#c4c4c4"/></svg>
<svg style="position:absolute;left:174px;top:110px;" width="20" height="20" viewBox="0 0 20 20"><path d="M9.5 2 L9.5 15 H16.5 Z" fill="#c4c4c4"/><path d="M3 9 L9 9 V15 H3 Z" fill="#e8ecf0" stroke="#c4c4c4" stroke-width="0.6"/><path d="M3 16 H17 V18 H3 Z" fill="#c4c4c4"/><path d="M11 4.5 Q15 4.5 15 8.5" fill="none" stroke="#c4c4c4" stroke-width="1.2"/><path d="M13.5 8 L15 10 L16.5 8 Z" fill="#c4c4c4"/></svg>
<svg style="position:absolute;left:211px;top:110px;" width="20" height="20" viewBox="0 0 20 20"><path d="M8.5 2 L8.5 17 H2 Z" fill="#c4c4c4"/><path d="M11.5 2 L11.5 17 H18 Z" fill="#f6f0d8" stroke="#c4c4c4" stroke-width="0.6"/><path d="M10 2 V17" stroke="#c4c4c4" stroke-width="0.8" stroke-dasharray="1.5 1"/></svg>
<svg style="position:absolute;left:248px;top:110px;" width="20" height="20" viewBox="0 0 20 20"><path d="M17 2 V8 H3 Z" fill="#e8ecf0" stroke="#c4c4c4" stroke-width="0.6"/><path d="M17 18 V11 H3 Z" fill="#c4c4c4"/><path d="M2 9.5 H18" stroke="#c4c4c4" stroke-width="0.8" stroke-dasharray="1.5 1"/></svg>
<div style="position:absolute;left:283.5px;top:103px;width:1px;height:34px;background:#d9d5d1;"></div>
<svg style="position:absolute;left:299px;top:110px;" width="20" height="20" viewBox="0 0 20 20"><path d="M6 2 V12" stroke="#c8c8c8" stroke-width="1.2"/><path d="M3.5 10 L6 13 L8.5 10 Z" fill="#c8c8c8"/><g fill="#c8c8c8"><rect x="10" y="2" width="7" height="2"/><rect x="10" y="5" width="7" height="2"/><rect x="10" y="8" width="7" height="2"/><rect x="10" y="11" width="7" height="2"/></g><rect x="2.5" y="15" width="15" height="2.5" fill="#f8f0d8" stroke="#c8c8c8" stroke-width="0.8"/></svg>
<svg style="position:absolute;left:336px;top:110px;" width="20" height="20" viewBox="0 0 20 20"><g fill="#c8c8c8"><rect x="9" y="2" width="7" height="2"/><rect x="7" y="5" width="9" height="2"/><rect x="9" y="8" width="7" height="2"/><rect x="9" y="15" width="7" height="2"/></g><rect x="2.5" y="11" width="15" height="2.5" fill="#f8f0d8" stroke="#c8c8c8" stroke-width="0.8"/><path d="M5.5 5 Q3.5 6.5 4.5 9" fill="none" stroke="#c8c8c8" stroke-width="1.2"/><path d="M2.5 8 L5 10 L6.5 7.5 Z" fill="#c8c8c8"/></svg>
<svg style="position:absolute;left:373px;top:110px;" width="20" height="20" viewBox="0 0 20 20"><g fill="#c8c8c8"><rect x="2" y="2" width="7" height="2"/><rect x="2" y="8" width="7" height="2"/><rect x="2" y="11" width="9" height="2"/><rect x="2" y="14" width="7" height="2"/></g><rect x="2.5" y="5" width="15" height="2.5" fill="#eef2f6" stroke="#c8c8c8" stroke-width="0.8"/><path d="M14.5 12 Q15 9.5 13.5 9" fill="none" stroke="#c8c8c8" stroke-width="1.2"/><path d="M12.5 9 L15.5 7.5 L15.5 11 Z" fill="#c8c8c8"/></svg>
<svg style="position:absolute;left:410px;top:110px;" width="20" height="20" viewBox="0 0 20 20"><rect x="2.5" y="2" width="15" height="2.5" fill="#eef2f6" stroke="#c8c8c8" stroke-width="0.8"/><g fill="#c8c8c8"><rect x="2" y="6" width="7" height="2"/><rect x="2" y="9" width="7" height="2"/><rect x="2" y="12" width="7" height="2"/><rect x="2" y="15" width="7" height="2"/></g><path d="M14 7 V17" stroke="#c8c8c8" stroke-width="1.2"/><path d="M11.5 8 L14 5 L16.5 8 Z" fill="#c8c8c8"/></svg>
<div style="position:absolute;left:445px;top:103px;width:1px;height:34px;background:#d9d5d1;"></div>
<div style="position:absolute;top:113.00px;font-size:15px;line-height:15px;color:#929595;font-family:'Liberation Sans', sans-serif;white-space:nowrap;left:456px;">X:</div>
<div style="position:absolute;left:471px;top:103px;width:148px;height:34px;box-sizing:border-box;background:#fafaf9;border:1px solid #cdc7c2;border-radius:5px;"></div>
<div style="position:absolute;left:584px;top:104px;width:1px;height:32px;background:#e4e0dc;"></div>
<div style="position:absolute;left:602px;top:104px;width:1px;height:32px;background:#e4e0dc;"></div>
<div style="position:absolute;top:111.90px;font-size:15px;line-height:15px;color:#929595;font-family:'Liberation Sans', sans-serif;white-space:nowrap;left:474.5px;letter-spacing:1.1px;">0,000</div>
<div style="position:absolute;left:588px;top:120px;width:10px;height:1.5px;background:#d0d0d0;"></div>
<div style="position:absolute;left:606px;top:120px;width:10px;height:1.5px;background:#d0d0d0;"></div>
<div style="position:absolute;left:610px;top:115px;width:1.5px;height:10.5px;background:#d0d0d0;"></div>
<div style="position:absolute;top:113.00px;font-size:15px;line-height:15px;color:#929595;font-family:'Liberation Sans', sans-serif;white-space:nowrap;left:626px;">Y:</div>
<div style="position:absolute;left:640px;top:103px;width:148px;height:34px;box-sizing:border-box;background:#fafaf9;border:1px solid #cdc7c2;border-radius:5px;"></div>
<div style="position:absolute;left:753px;top:104px;width:1px;height:32px;background:#e4e0dc;"></div>
<div style="position:absolute;left:771px;top:104px;width:1px;height:32px;background:#e4e0dc;"></div>
<div style="position:absolute;top:111.90px;font-size:15px;line-height:15px;color:#929595;font-family:'Liberation Sans', sans-serif;white-space:nowrap;left:643.5px;letter-spacing:1.1px;">0,000</div>
<div style="position:absolute;left:757px;top:120px;width:10px;height:1.5px;background:#d0d0d0;"></div>
<div style="position:absolute;left:774px;top:120px;width:10px;height:1.5px;background:#d0d0d0;"></div>
<div style="position:absolute;left:779px;top:115px;width:1.5px;height:10.5px;background:#d0d0d0;"></div>
<div style="position:absolute;top:113.00px;font-size:15px;line-height:15px;color:#929595;font-family:'Liberation Sans', sans-serif;white-space:nowrap;left:795px;">B:</div>
<div style="position:absolute;left:810px;top:103px;width:143px;height:34px;box-sizing:border-box;background:#fafaf9;border:1px solid #cdc7c2;border-radius:5px;"></div>
<div style="position:absolute;left:918px;top:104px;width:1px;height:32px;background:#e4e0dc;"></div>
<div style="position:absolute;left:935.5px;top:104px;width:1px;height:32px;background:#e4e0dc;"></div>
<div style="position:absolute;top:111.90px;font-size:15px;line-height:15px;color:#929595;font-family:'Liberation Sans', sans-serif;white-space:nowrap;left:813.5px;letter-spacing:1.1px;">0,000</div>
<div style="position:absolute;left:922px;top:120px;width:10px;height:1.5px;background:#d0d0d0;"></div>
<div style="position:absolute;left:939px;top:120px;width:10px;height:1.5px;background:#d0d0d0;"></div>
<div style="position:absolute;left:944px;top:115px;width:1.5px;height:10.5px;background:#d0d0d0;"></div>
<svg style="position:absolute;left:965px;top:110px;" width="20" height="20" viewBox="0 0 20 20"><path d="M7 8 V5 Q7 1.8 10 1.8 Q13 1.8 13 5" fill="none" stroke="#222" stroke-width="1.5"/><path d="M3.5 9 L14.5 7.5 L15.5 15 L4.5 16.5 Z" fill="#f4e27a" stroke="#222" stroke-width="1"/><circle cx="9.5" cy="12" r="1.2" fill="#111"/></svg>
<div style="position:absolute;top:113.00px;font-size:15px;line-height:15px;color:#929595;font-family:'Liberation Sans', sans-serif;white-space:nowrap;left:997.5px;">H:</div>
<div style="position:absolute;left:1014px;top:103px;width:142px;height:34px;box-sizing:border-box;background:#fafaf9;border:1px solid #cdc7c2;border-radius:5px;"></div>
<div style="position:absolute;left:1122.5px;top:104px;width:1px;height:32px;background:#e4e0dc;"></div>
<div style="position:absolute;left:1139.5px;top:104px;width:1px;height:32px;background:#e4e0dc;"></div>
<div style="position:absolute;top:111.90px;font-size:15px;line-height:15px;color:#929595;font-family:'Liberation Sans', sans-serif;white-space:nowrap;left:1017.5px;letter-spacing:1.1px;">0,000</div>
<div style="position:absolute;left:1126px;top:120px;width:10px;height:1.5px;background:#d0d0d0;"></div>
<div style="position:absolute;left:1143px;top:120px;width:10px;height:1.5px;background:#d0d0d0;"></div>
<div style="position:absolute;left:1147px;top:115px;width:1.5px;height:10.5px;background:#d0d0d0;"></div>
<div style="position:absolute;left:1162px;top:103px;width:64px;height:34px;box-sizing:border-box;background:linear-gradient(#f8f7f6,#edebe9);border:1px solid #cdc7c2;border-radius:5px;"></div>
<div style="position:absolute;top:112.80px;font-size:15px;line-height:15px;color:#2e3436;font-family:'Liberation Sans', sans-serif;white-space:nowrap;left:1173.5px;">px</div>
<svg style="position:absolute;left:1203px;top:117.5px;" width="12" height="8" viewBox="0 0 12 8"><path d="M0.5 0.5 H11.5 L6 6.5 Z" fill="#2e3436"/></svg>
<div style="position:absolute;left:1234.5px;top:103px;width:1px;height:34px;background:#d9d5d1;"></div>
<div style="position:absolute;left:1242px;top:103px;width:35.5px;height:33.5px;background:#d6d1cd;border-radius:5px;"></div>
<div style="position:absolute;left:1279.5px;top:103px;width:35.5px;height:33.5px;background:#d6d1cd;border-radius:5px;"></div>
<div style="position:absolute;left:1316.5px;top:103px;width:35.5px;height:33.5px;background:#d6d1cd;border-radius:5px;"></div>
<div style="position:absolute;left:1353.5px;top:103px;width:35.5px;height:33.5px;background:#d6d1cd;border-radius:5px;"></div>
<svg style="position:absolute;left:1250px;top:110px;" width="20" height="20" viewBox="0 0 20 20"><g transform="translate(-1.8,-1.2) scale(1.18)"><rect x="3" y="2" width="13" height="3" fill="#111"/><rect x="3" y="6" width="10" height="1.5" fill="#111"/><rect x="13.5" y="2" width="2.5" height="8" fill="#111"/><path d="M4 14 H6 M7.5 14 H9.5 M11 14 H14" stroke="#111" stroke-width="1.2"/><path d="M13.5 11.5 L17 14 L13.5 16.5 Z" fill="#111"/></g></svg>
<svg style="position:absolute;left:1287px;top:110px;" width="20" height="20" viewBox="0 0 20 20"><g transform="translate(-1.8,-1.2) scale(1.18)"><path d="M3 3 H10 Q15 3 15 9" fill="none" stroke="#111" stroke-width="1.3"/><path d="M3 6 H9 Q12.5 6 12.5 9" fill="none" stroke="#111" stroke-width="1.3"/><path d="M4 14 H6 M7.5 14 H9.5 M11 14 H14" stroke="#111" stroke-width="1.2"/><path d="M13.5 11.5 L17 14 L13.5 16.5 Z" fill="#111"/></g></svg>
<svg style="position:absolute;left:1324px;top:110px;" width="20" height="20" viewBox="0 0 20 20"><g transform="translate(-1.8,-1.2) scale(1.18)"><defs><linearGradient id="tg3" x1="0" y1="0" x2="1" y2="1"><stop offset="0" stop-color="#dfe8f4"/><stop offset="1" stop-color="#6a8cb8"/></linearGradient></defs><rect x="3" y="2" width="13" height="7.5" fill="url(#tg3)"/><rect x="3" y="2" width="13" height="2" fill="#111"/><rect x="14" y="2" width="2" height="8" fill="#111"/><path d="M4 14 H6 M7.5 14 H9.5 M11 14 H14" stroke="#111" stroke-width="1.2"/><path d="M13.5 11.5 L17 14 L13.5 16.5 Z" fill="#111"/></g></svg>
<svg style="position:absolute;left:1361px;top:110px;" width="20" height="20" viewBox="0 0 20 20"><g transform="translate(-1.8,-1.2) scale(1.18)"><rect x="3" y="2" width="13" height="2" fill="#111"/><g fill="#111"><circle cx="5" cy="6.5" r="1.6"/><circle cx="9.5" cy="6.5" r="1.6"/><circle cx="14" cy="6.5" r="1.6"/></g><rect x="3" y="5.8" width="13" height="1.4" fill="#111"/><path d="M4 14 H6 M7.5 14 H9.5 M11 14 H14" stroke="#111" stroke-width="1.2"/><path d="M13.5 11.5 L17 14 L13.5 16.5 Z" fill="#111"/></g></svg>
<div style="position:absolute;left:4px;top:145px;width:50.5px;height:41px;background:#d6d1cd;border-radius:5px;"></div>
<svg style="position:absolute;left:0px;top:0px;" width="56" height="955" viewBox="0 0 56 955"><defs>
<linearGradient id="t_rect" x1="0" y1="0" x2="1" y2="1"><stop offset="0" stop-color="#ffffff"/><stop offset="1" stop-color="#8eaccb"/></linearGradient>
<linearGradient id="t_circ" x1="0.2" y1="0" x2="0.7" y2="1"><stop offset="0" stop-color="#ffffff"/><stop offset="1" stop-color="#ff9aa8"/></linearGradient>
<linearGradient id="t_star" x1="0" y1="0" x2="1" y2="1"><stop offset="0" stop-color="#fffbe0"/><stop offset="1" stop-color="#f0d040"/></linearGradient>
<linearGradient id="t_cube" x1="0" y1="0" x2="1" y2="1"><stop offset="0" stop-color="#e8e8ff"/><stop offset="1" stop-color="#6a6ab8"/></linearGradient>
<linearGradient id="t_pen" x1="0" y1="0" x2="1" y2="0"><stop offset="0" stop-color="#3f7fbf"/><stop offset="1" stop-color="#bfe0f5"/></linearGradient>
<linearGradient id="t_pcl" x1="0" y1="0" x2="1" y2="0"><stop offset="0" stop-color="#f59a00"/><stop offset="1" stop-color="#ffe680"/></linearGradient>
<linearGradient id="t_nib" x1="0" y1="0" x2="1" y2="1"><stop offset="0" stop-color="#fff8c8"/><stop offset="1" stop-color="#d8a010"/></linearGradient>
<linearGradient id="t_txt" x1="0" y1="0" x2="0" y2="1"><stop offset="0" stop-color="#555"/><stop offset="0.5" stop-color="#000"/><stop offset="1" stop-color="#333"/></linearGradient>
<linearGradient id="t_grad" x1="0" y1="0" x2="1" y2="1"><stop offset="0" stop-color="#ffffff"/><stop offset="1" stop-color="#2f9a44"/></linearGradient>
<linearGradient id="t_mesh" x1="0" y1="0" x2="1" y2="1"><stop offset="0" stop-color="#4f9f7f"/><stop offset="1" stop-color="#5f9fbf"/></linearGradient>
<linearGradient id="t_bkt" x1="0" y1="0" x2="1" y2="0"><stop offset="0" stop-color="#2a6aaa"/><stop offset="1" stop-color="#c0e0f5"/></linearGradient>
<linearGradient id="t_tw" x1="0" y1="0" x2="0" y2="1"><stop offset="0" stop-color="#f0f0f0"/><stop offset="1" stop-color="#7a7a7a"/></linearGradient>
<linearGradient id="t_spr" x1="0" y1="0" x2="1" y2="0"><stop offset="0" stop-color="#2f8f1f"/><stop offset="1" stop-color="#b0f070"/></linearGradient>
</defs><path d="M20.5 151.3 L35.9 168.2 L30.2 168.2 L33.6 176.1 L28.4 178.2 L25.1 170.8 L20.5 175.3 Z" fill="#000" stroke="#fff" stroke-width="1.1" stroke-linejoin="miter"/><path d="M16.3 219.6 Q16.5 204 22 199.5 Q28 194.5 41.6 194.2" fill="none" stroke="#555" stroke-width="1.3"/><rect x="13.5" y="216.5" width="6" height="6" fill="#a0a0ff" stroke="#5a5aff" stroke-width="1.3"/><rect x="38.5" y="191.2" width="6" height="6" fill="#a0a0ff" stroke="#5a5aff" stroke-width="1.3"/><rect x="17.5" y="195.8" width="8.5" height="8" fill="#9090f0" stroke="#0000ff" stroke-width="1.8"/><path d="M22.5 201.3 L41 214.3 L34.3 220.6 Z" fill="#000" stroke="#fff" stroke-width="0.9"/><rect x="4" y="235" width="51" height="1" fill="#dddad7"/><rect x="16.5" y="250.5" width="25.5" height="25.5" fill="url(#t_rect)" stroke="#000" stroke-width="1.4"/><rect x="18" y="252" width="22.5" height="22.5" fill="none" stroke="#fff" stroke-width="0.8" opacity="0.8"/><circle cx="28.9" cy="304.5" r="12.6" fill="url(#t_circ)" stroke="#000" stroke-width="1.4"/><path d="M23.7 333.7 L33 338.6 L30.5 351.8 L17.8 352.5 L14 340 Z" fill="url(#t_star)" stroke="#000" stroke-width="1.1"/><path d="M34.8 338.4 L37.2 345.6 L45 347.8 L38.8 352.4 L38.4 360.8 L31.6 356 L23.8 358.2 L26.4 350.6 L21.6 344.4 L29.4 344.2 Z" fill="url(#t_star)" stroke="#000" stroke-width="1.1"/><path d="M31.6 373.5 L43 382.5 L42.3 399 L28.5 404.5 L16.7 396.6 L16.7 378.5 Z" fill="url(#t_cube)"/><path d="M31.6 374.5 L33 378.6 L33 392 L19 398 L16.7 396.6 L16.7 378.5 Z" fill="url(#t_cube)"/><path d="M33 378.6 L43 382.5 L42.3 399 L33 392 Z" fill="#dcdcff"/><path d="M19 398 L33 392 L42.3 399 L28.5 404.5 Z" fill="#3c3c8c"/><path d="M31.6 373.5 L43 382.5 L42.3 399 L28.5 404.5 L16.7 396.6 L16.7 378.5 Z" fill="none" stroke="#111" stroke-width="1.5" stroke-linejoin="round"/><path d="M30.85 430.25 L30.96 430.35 L31.05 430.46 L31.15 430.57 L31.23 430.70 L31.31 430.84 L31.38 430.98 L31.44 431.14 L31.48 431.30 L31.52 431.46 L31.55 431.64 L31.56 431.81 L31.57 432.00 L31.56 432.18 L31.53 432.37 L31.49 432.56 L31.44 432.75 L31.38 432.94 L31.30 433.13 L31.20 433.31 L31.09 433.49 L30.97 433.67 L30.83 433.84 L30.68 434.01 L30.51 434.16 L30.34 434.31 L30.15 434.45 L29.94 434.57 L29.73 434.68 L29.51 434.79 L29.27 434.87 L29.03 434.94 L28.78 435.00 L28.52 435.04 L28.25 435.06 L27.99 435.07 L27.71 435.06 L27.44 435.03 L27.16 434.98 L26.89 434.91 L26.61 434.82 L26.34 434.72 L26.07 434.59 L25.81 434.45 L25.55 434.28 L25.31 434.10 L25.07 433.90 L24.84 433.68 L24.63 433.44 L24.42 433.19 L24.24 432.92 L24.07 432.64 L23.91 432.34 L23.78 432.03 L23.66 431.71 L23.56 431.38 L23.49 431.04 L23.43 430.69 L23.40 430.33 L23.39 429.97 L23.41 429.61 L23.45 429.24 L23.51 428.87 L23.60 428.50 L23.71 428.14 L23.85 427.78 L24.01 427.43 L24.19 427.08 L24.40 426.74 L24.64 426.42 L24.89 426.10 L25.17 425.81 L25.47 425.52 L25.79 425.26 L26.13 425.01 L26.49 424.78 L26.86 424.58 L27.26 424.40 L27.66 424.24 L28.08 424.11 L28.51 424.00 L28.95 423.92 L29.40 423.87 L29.85 423.84 L30.31 423.85 L30.77 423.89 L31.24 423.95 L31.70 424.05 L32.15 424.17 L32.61 424.33 L33.05 424.52 L33.49 424.73 L33.91 424.98 L34.32 425.25 L34.72 425.55 L35.10 425.88 L35.46 426.24 L35.80 426.62 L36.11 427.03 L36.40 427.45 L36.67 427.90 L36.91 428.37 L37.12 428.85 L37.30 429.36 L37.45 429.87 L37.57 430.40 L37.65 430.94 L37.70 431.49 L37.71 432.04 L37.69 432.60 L37.64 433.15 L37.54 433.71 L37.41 434.26 L37.25 434.81 L37.05 435.35 L36.81 435.88 L36.54 436.40 L36.24 436.90 L35.90 437.39 L35.53 437.85 L35.12 438.30 L34.69 438.72 L34.23 439.11 L33.74 439.48 L33.23 439.82 L32.69 440.12 L32.13 440.40 L31.55 440.64 L30.95 440.84 L30.33 441.00 L29.71 441.13 L29.07 441.22 L28.43 441.26 L27.78 441.27 L27.12 441.23 L26.47 441.16 L25.82 441.04 L25.17 440.88 L24.53 440.67 L23.90 440.43 L23.29 440.14 L22.69 439.82 L22.11 439.45 L21.55 439.05 L21.01 438.61 L20.50 438.13 L20.02 437.62 L19.57 437.08 L19.15 436.50 L18.77 435.90 L18.42 435.27 L18.11 434.62 L17.85 433.95 L17.62 433.25 L17.44 432.54 L17.31 431.82 L17.21 431.08 L17.17 430.34 L17.17 429.59 L17.22 428.84 L17.32 428.09 L17.47 427.34 L17.66 426.60 L17.90 425.87 L18.19 425.16 L18.53 424.46 L18.91 423.77 L19.33 423.12 L19.80 422.48 L20.31 421.87 L20.86 421.30 L21.45 420.76 L22.07 420.25 L22.73 419.78 L23.42 419.35 L24.14 418.97 L24.88 418.63 L25.65 418.33 L26.44 418.09 L27.25 417.89 L28.07 417.74 L28.91 417.65 L29.75 417.60 L30.60 417.62 L31.44 417.68 L32.29 417.80 L33.13 417.97 L33.97 418.20 L34.79 418.48 L35.59 418.81 L36.38 419.20 L37.14 419.63 L37.88 420.12 L38.58 420.65 L39.26 421.23 L39.90 421.85 L40.51 422.52 L41.07 423.22 L41.59 423.97 L42.06 424.74 L42.49 425.55 L42.86 426.39 L43.18 427.25 L43.45 428.14 L43.67 429.04 L43.82 429.96 L43.92 430.90 L43.96 431.84 L43.94 432.78 L43.86 433.73 L43.72 434.67 L43.52 435.61 L43.26 436.53 L42.94 437.44 L42.57 438.34 L42.13 439.21 L41.64 440.05 L41.10 440.87 L40.50 441.65 L39.85 442.40 L39.16 443.10" fill="none" stroke="#111" stroke-width="1.5" stroke-linecap="round"/><rect x="4" y="459" width="51" height="1" fill="#dddad7"/><defs><linearGradient id="t_pen2" x1="0" y1="0" x2="1" y2="0.4"><stop offset="0" stop-color="#a8d8f0"/><stop offset="1" stop-color="#2a5a90"/></linearGradient><linearGradient id="t_pcl2" x1="0" y1="0" x2="1" y2="0.3"><stop offset="0" stop-color="#fff030"/><stop offset="1" stop-color="#f08a00"/></linearGradient><linearGradient id="t_wood" x1="0" y1="0" x2="1" y2="1"><stop offset="0" stop-color="#ffffff"/><stop offset="1" stop-color="#f0b030"/></linearGradient></defs><path d="M15.2 472.8 H31.1" stroke="#333" stroke-width="1.3"/><path d="M15.2 472.8 Q23 478 25.8 487.5 Q27.5 497 20.1 499.6" fill="none" stroke="#111" stroke-width="1.2"/><path d="M19.4 499.6 H27" stroke="#333" stroke-width="1.1"/><rect x="13.6" y="497" width="5.6" height="5.2" fill="#fff" stroke="#111" stroke-width="1.3"/><circle cx="28.1" cy="500.4" r="1.4" fill="#fff" stroke="#111" stroke-width="1.1"/><path d="M33 489.5 L35.5 490.8 L31.6 498.5 L29.2 497.3 Z" fill="#fff" stroke="#111" stroke-width="0.9"/><path d="M30.8 484.2 L39.1 488 L37.8 490.8 L30 487.2 Z" fill="#f8d040" stroke="#111" stroke-width="0.9"/><path d="M34.6 471.3 Q38.5 470.2 40.5 472.5 Q43 475.5 44.4 479.7 L39.9 486.5 L30.8 481.9 Z" fill="url(#t_pen2)" stroke="#111" stroke-width="1"/><path d="M35.5 473 L32.5 480" stroke="#fff" stroke-width="0.7" opacity="0.8"/><path d="M14.4 514.9 Q19.5 513.6 20.1 515.5 Q20 519 14.8 528.6 Q19 527.8 21.2 530 Q24.3 533.5 23.3 538 Q23 542.5 28.5 543.3 Q35 543.5 40.6 536.6" fill="none" stroke="#222" stroke-width="1.2"/><path d="M33.8 513.4 Q38.5 513.5 40 516 L42.9 521.8 L38.3 529 L29.2 524.4 Z" fill="url(#t_pcl2)" stroke="#111" stroke-width="1"/><path d="M29.2 524.4 L38.3 529 L28.5 541.4 Z" fill="url(#t_wood)" stroke="#111" stroke-width="1"/><path d="M29 537 L30.8 538.5 L28.5 541.4 Z" fill="#111"/><path d="M34.5 515.5 L31 523" stroke="#fff" stroke-width="0.8" opacity="0.8"/><defs><linearGradient id="t_cap" x1="0" y1="0" x2="1" y2="0"><stop offset="0" stop-color="#d8f0ff"/><stop offset="1" stop-color="#3a70b0"/></linearGradient><linearGradient id="t_brs" x1="0" y1="0" x2="1" y2="1"><stop offset="0" stop-color="#444"/><stop offset="0.4" stop-color="#000"/></linearGradient></defs><path d="M13.1 555.3 Q20.2 555.6 24 559.5 Q25.5 564 24.3 567.6 Q22.2 572.5 21.2 577 Q20.8 581.8 24.5 583.8 Q29.2 585.6 35.7 583 Q38.5 581 39.8 580.2 Q42.5 579.6 43.8 581.4 Q41.5 581.6 40.6 582.2 Q37 584.5 35.7 584.9 Q30 587.6 25 586.8 Q18.5 584.6 16.3 578.5 Q15.4 572 16.6 566 Q17.8 559.5 13.1 555.3 Z" fill="url(#t_brs)"/><path d="M26.5 568.8 L31.6 563.5 L40.2 565.5 L39.4 573.3 L30 582.6 L26.5 582.6 Z" fill="url(#t_nib)" stroke="#111" stroke-width="1"/><path d="M32 570.8 L28.4 580.6" stroke="#111" stroke-width="0.9"/><circle cx="32" cy="570.8" r="1.5" fill="#111"/><path d="M33.3 555.3 L44.7 558.2 L41.4 565.1 L32 562.7 Z" fill="url(#t_cap)" stroke="#111" stroke-width="0.8"/><path d="M33.2 561.2 L41.9 563.5 L41.2 565.2 L32.5 562.9 Z" fill="#e01010"/><path d="M33.5 555.5 L31.5 563" stroke="#111" stroke-width="1"/><path d="M15 625 L23.5 599.5 H30.5 L39 625 H33 L31.3 619.5 H22.7 L21 625 Z M24.3 614 H29.7 L27 605.5 Z" fill="url(#t_txt)" stroke="#000" stroke-width="0.6"/><path d="M37.5 599.5 H41.5 M39.5 599.5 V627 M37.5 627 H41.5" stroke="#222" stroke-width="1"/><rect x="4" y="641" width="51" height="1" fill="#dddad7"/><rect x="14.25" y="654.5" width="29.25" height="29.25" fill="url(#t_grad)"/><path d="M20.8 662.3 L37 675.8" stroke="#111" stroke-width="1.3"/><rect x="18" y="659.5" width="5.5" height="5.5" fill="#fff" stroke="#111" stroke-width="1.2"/><rect x="34.3" y="673" width="5.7" height="5.7" fill="#fff" stroke="#111" stroke-width="1.2"/><path d="M19 701 Q29 705 39.5 701 Q36 710.5 39.5 720.3 Q29 716 19 720.3 Q22 710.5 19 701 Z" fill="url(#t_mesh)" stroke="#222" stroke-width="1"/><rect x="16.5" y="698.5" width="5" height="5" fill="#fff" stroke="#111" stroke-width="1.2"/><rect x="37.25" y="698.5" width="5" height="5" fill="#fff" stroke="#111" stroke-width="1.2"/><rect x="16.5" y="718.0" width="5" height="5" fill="#fff" stroke="#111" stroke-width="1.2"/><rect x="37.25" y="718.0" width="5" height="5" fill="#fff" stroke="#111" stroke-width="1.2"/><path d="M36.5 743 Q37 737.5 42 738.5 Q46 740.5 43.5 745 L40.5 747.5 Z" fill="#111"/><path d="M34 745 L41.5 752" stroke="#111" stroke-width="2.4"/><path d="M35.5 749 L38 751.5 L23.5 765 Q21.5 766 21 764 Z" fill="#d8ecf8" stroke="#333" stroke-width="0.9"/><path d="M20.5 763.5 Q18 767 19 769 Q21 770.5 22.5 768 Q22.5 765.5 20.5 763.5 Z" fill="#3a7ac0"/><defs><radialGradient id="t_pud" cx="0.5" cy="0.5" r="0.5"><stop offset="0" stop-color="#e8f8e8"/><stop offset="1" stop-color="#5cc85c"/></radialGradient><linearGradient id="t_bk2" x1="0" y1="0" x2="0.3" y2="1"><stop offset="0" stop-color="#d8f4f8"/><stop offset="1" stop-color="#4a7ab8"/></linearGradient><linearGradient id="t_gin" x1="0" y1="0" x2="1" y2="1"><stop offset="0" stop-color="#40b040"/><stop offset="1" stop-color="#d0f0d0"/></linearGradient></defs><ellipse cx="28.4" cy="807.6" rx="13.3" ry="3" fill="url(#t_pud)" stroke="#111" stroke-width="1"/><path d="M24.5 799 Q25.5 803 23.8 804.6 L27.8 804.8 Q26.8 802.5 27.6 800.5 Z" fill="#c8f0c8" stroke="#111" stroke-width="0.9"/><path d="M19.8 787.3 L36.5 779.5 Q42.5 784 43.8 794.2 L27.6 801.5 Z" fill="url(#t_bk2)" stroke="#111" stroke-width="1.2" stroke-linejoin="round"/><ellipse cx="23.2" cy="794.4" rx="3.6" ry="7.9" transform="rotate(-26 23.2 794.4)" fill="url(#t_gin)" stroke="#111" stroke-width="1.1"/><path d="M23 785.5 Q22.2 779 24.4 779 Q26.2 779.5 27 783" fill="none" stroke="#111" stroke-width="1"/><path d="M27 783 L29 793" stroke="#111" stroke-width="1"/><circle cx="29" cy="793" r="1.5" fill="#888" stroke="#222" stroke-width="0.7"/><path d="M21.5 788.5 L35.5 782" stroke="#fff" stroke-width="0.8" opacity="0.7"/><rect x="4" y="823" width="51" height="1" fill="#dddad7"/><path d="M14 866 V852 Q18 852 21.5 849 Q23.5 838.5 31.5 837 Q40 836.5 41 843 Q41.5 848 37 848.5 Q33 849 33.5 845 Q34.5 843 36 844 Q32 841.5 29 845.5 Q27 852.5 35 853 H43 V866 Z" fill="url(#t_tw)" stroke="#333" stroke-width="1.1"/><circle cx="17.5" cy="880" r="1.4" fill="#111"/><circle cx="21.5" cy="879.5" r="1" fill="#111"/><circle cx="16" cy="885.5" r="1.3" fill="#111"/><circle cx="20.5" cy="884" r="1" fill="#111"/><circle cx="24.5" cy="883" r="0.9" fill="#111"/><circle cx="18.5" cy="890" r="1.5" fill="#111"/><circle cx="23" cy="888" r="0.9" fill="#111"/><circle cx="26.5" cy="886.5" r="0.8" fill="#111"/><circle cx="27.5" cy="881.5" r="0.8" fill="#111"/><path d="M30 889 L40 884.5 L44.5 905 L35 909 Z" fill="url(#t_spr)" stroke="#111" stroke-width="1.1"/><path d="M30.5 883 L37 880 L39.5 886 L33 889 Z" fill="#f8e870" stroke="#111" stroke-width="0.9"/></svg>
<svg style="position:absolute;left:24px;top:928px;" width="10" height="14" viewBox="0 0 10 14"><path d="M2 1.5 L8 7 L2 12.5 Z" fill="#2e3436"/></svg>
<div style="position:absolute;left:1880px;top:145px;width:36px;height:33.5px;background:#d6d1cd;border-radius:5px;"></div>
<svg style="position:absolute;left:1888px;top:152px;" width="20" height="20" viewBox="0 0 20 20"><path d="M5 5 L14 13" stroke="#000" stroke-width="1.3"/><path d="M11 14.5 L15.5 15 L15 10.5 Z" fill="#000"/><rect x="2.5" y="2.5" width="4" height="4" fill="#fff" stroke="#3030ff" stroke-width="1.4" transform="rotate(45 4.5 4.5)"/><rect x="13.5" y="13.5" width="4" height="4" fill="#fff" stroke="#2a9a2a" stroke-width="1.4" transform="rotate(45 15.5 15.5)"/></svg>
<div style="position:absolute;left:1880px;top:185px;width:36px;height:1px;background:#dcd8d4;"></div>
<svg style="position:absolute;left:1888px;top:200px;" width="20" height="20" viewBox="0 0 20 20"><path d="M5 5 L14 13" stroke="#000" stroke-width="1.3"/><path d="M11 14.5 L15.5 15 L15 10.5 Z" fill="#000"/><rect x="2.5" y="2.5" width="4" height="4" fill="#fff" stroke="#3030ff" stroke-width="1.4" transform="rotate(45 4.5 4.5)"/><rect x="13.5" y="13.5" width="4" height="4" fill="#fff" stroke="#2a9a2a" stroke-width="1.4" transform="rotate(45 15.5 15.5)"/></svg>
<svg style="position:absolute;left:1888px;top:235px;" width="20" height="20" viewBox="0 0 20 20"><path d="M3 16 H14 V4" fill="none" stroke="#b8d8b8" stroke-width="1.3" stroke-dasharray="1.3 1.3"/></svg>
<svg style="position:absolute;left:1888px;top:270px;" width="20" height="20" viewBox="0 0 20 20"><path d="M3 10 H14 V4 M14 10 V16" fill="none" stroke="#b8d8b8" stroke-width="1.3" stroke-dasharray="1.3 1.3"/><rect x="12" y="8" width="4" height="4" fill="#e0f0e0" stroke="#b8d8b8" transform="rotate(45 14 10)"/></svg>
<svg style="position:absolute;left:1888px;top:305px;" width="20" height="20" viewBox="0 0 20 20"><path d="M3 16 H14 V4" fill="none" stroke="#b8d8b8" stroke-width="1.3" stroke-dasharray="1.3 1.3"/><circle cx="14" cy="8" r="2" fill="#e0f0e0" stroke="#b8d8b8"/></svg>
<svg style="position:absolute;left:1888px;top:339px;" width="20" height="20" viewBox="0 0 20 20"><path d="M3 16 H14 V4" fill="none" stroke="#b8d8b8" stroke-width="1.3" stroke-dasharray="1.3 1.3"/><circle cx="6" cy="8" r="1.8" fill="none" stroke="#b8d8b8"/></svg>
<div style="position:absolute;left:1880px;top:374.5px;width:36px;height:1px;background:#dcd8d4;"></div>
<div style="position:absolute;left:1880px;top:383px;width:36px;height:33.5px;background:#d6d1cd;border-radius:5px;"></div>
<svg style="position:absolute;left:1888px;top:390px;" width="20" height="20" viewBox="0 0 20 20"><path d="M5 5 L14 13" stroke="#000" stroke-width="1.3"/><path d="M11 14.5 L15.5 15 L15 10.5 Z" fill="#000"/><rect x="2.5" y="2.5" width="4" height="4" fill="#fff" stroke="#3030ff" stroke-width="1.4" transform="rotate(45 4.5 4.5)"/><rect x="13.5" y="13.5" width="4" height="4" fill="#fff" stroke="#2a9a2a" stroke-width="1.4" transform="rotate(45 15.5 15.5)"/></svg>
<svg style="position:absolute;left:1888px;top:426px;" width="20" height="20" viewBox="0 0 20 20"><path d="M4 5 Q10 4 14 9 Q16 13 13 16 Q11 17 10 14" fill="none" stroke="#1a8a1a" stroke-width="1.8"/></svg>
<svg style="position:absolute;left:1888px;top:460px;" width="20" height="20" viewBox="0 0 20 20"><path d="M3 17 L17 5 M3 13 L17 9" stroke="#333" stroke-width="1"/><circle cx="10" cy="11" r="2.2" fill="#60c060" stroke="#1a6a1a" stroke-width="0.9"/></svg>
<div style="position:absolute;left:1880px;top:488px;width:36px;height:33.5px;background:#d6d1cd;border-radius:5px;"></div>
<svg style="position:absolute;left:1888px;top:495px;" width="20" height="20" viewBox="0 0 20 20"><path d="M4 4 Q11 4 13 9 Q14 13 11 15" fill="none" stroke="#333" stroke-width="1.2"/><rect x="6.5" y="12.5" width="4" height="4" fill="#60c060" stroke="#1a6a1a" transform="rotate(45 8.5 14.5)"/></svg>
<svg style="position:absolute;left:1888px;top:530px;" width="20" height="20" viewBox="0 0 20 20"><path d="M4 5 H9 Q14 7 13 12 Q12 16 8 16" fill="none" stroke="#333" stroke-width="1.2"/><rect x="7" y="3.5" width="3.5" height="3.5" fill="#60c060" stroke="#1a6a1a"/></svg>
<svg style="position:absolute;left:1888px;top:565px;" width="20" height="20" viewBox="0 0 20 20"><path d="M3 15 L17 6" stroke="#1a6a1a" stroke-width="1"/><circle cx="10" cy="10.5" r="2" fill="#60c060" stroke="#1a6a1a"/><path d="M4 13 L6 18 M6 12 L8 17 M13 4 L15 9 M15 3 L17 8" stroke="#d02020" stroke-width="1.1"/></svg>
<div style="position:absolute;left:1880px;top:599px;width:36px;height:1px;background:#dcd8d4;"></div>
<div style="position:absolute;left:1880px;top:607.5px;width:36px;height:32.5px;background:#d6d1cd;border-radius:5px;"></div>
<svg style="position:absolute;left:1888px;top:614px;" width="20" height="20" viewBox="0 0 20 20"><path d="M5 5 L14 13" stroke="#000" stroke-width="1.3"/><path d="M11 14.5 L15.5 15 L15 10.5 Z" fill="#000"/><rect x="2.5" y="2.5" width="4" height="4" fill="#fff" stroke="#3030ff" stroke-width="1.4" transform="rotate(45 4.5 4.5)"/><rect x="13.5" y="13.5" width="4" height="4" fill="#fff" stroke="#2a9a2a" stroke-width="1.4" transform="rotate(45 15.5 15.5)"/></svg>
<svg style="position:absolute;left:1888px;top:648px;" width="20" height="20" viewBox="0 0 20 20"><path d="M4 17 H16 V4" fill="none" stroke="#bbb" stroke-width="1"/><circle cx="9" cy="9" r="1.8" fill="#e0f0e0" stroke="#1a8a1a" stroke-width="1"/></svg>
<svg style="position:absolute;left:1888px;top:682px;" width="20" height="20" viewBox="0 0 20 20"><path d="M3 16 H16 V4" fill="none" stroke="#555" stroke-width="1.2" stroke-dasharray="1.3 1.3"/><path d="M5 9 H11 M8 6 V12" stroke="#111" stroke-width="1.2"/></svg>
<svg style="position:absolute;left:1888px;top:718px;" width="20" height="20" viewBox="0 0 20 20"><path d="M4 17 L9 3 H12 L17 17 H14 L13 14 H8 L7 17 Z M9 11 H12 L10.5 6 Z" fill="#111"/><path d="M3 17 H17" stroke="#2a9a2a" stroke-width="1.2"/><rect x="1.5" y="15.5" width="3" height="3" fill="#fff" stroke="#2a9a2a" transform="rotate(45 3 17)"/></svg>
<div style="position:absolute;left:1880px;top:753px;width:36px;height:1px;background:#dcd8d4;"></div>
<svg style="position:absolute;left:1888px;top:768px;" width="20" height="20" viewBox="0 0 20 20"><defs><linearGradient id="pgx" x1="0" y1="0" x2="1" y2="1"><stop offset="0" stop-color="#fff"/><stop offset="1" stop-color="#999"/></linearGradient></defs><rect x="5" y="3" width="10" height="13" fill="url(#pgx)" stroke="#111" stroke-width="1.2" rx="1"/></svg>
<div style="position:absolute;left:1880px;top:796px;width:36px;height:33.5px;background:#d6d1cd;border-radius:5px;"></div>
<svg style="position:absolute;left:1888px;top:802px;" width="20" height="20" viewBox="0 0 20 20"><g stroke="#0000ff" stroke-width="1.3"><path d="M3 5 H17 M3 9 H17 M3 13 H17 M3 17 H17"/><path d="M5 3 V19 M9 3 V19 M13 3 V19 M17 3 V19"/></g></svg>
<div style="position:absolute;left:1880px;top:831px;width:36px;height:33.5px;background:#d6d1cd;border-radius:5px;"></div>
<svg style="position:absolute;left:1888px;top:838px;" width="20" height="20" viewBox="0 0 20 20"><g stroke="#0000ff" stroke-width="1.3"><path d="M4 3 V17 M16 3 V17 M12 3 L8 17"/></g></svg>
<div style="position:absolute;left:1363px;top:141px;width:512px;height:34px;background:#ffffff;"></div>
<div style="position:absolute;left:1363px;top:175px;width:512px;height:1px;background:#dcd8d4;"></div>
<svg style="position:absolute;left:1363px;top:149.5px;" width="17" height="17" viewBox="0 0 17 17"><path d="M0.5 0.5 H16.5 V5 H15.5 Q15 2 12 2 H10 V14 Q10 15.2 12 15.2 V16.5 H5 V15.2 Q7 15.2 7 14 V2 H5 Q2 2 1.5 5 H0.5 Z" fill="#000"/></svg>
<div style="position:absolute;top:150.30px;font-size:15px;line-height:15px;color:#2e3436;font-family:'Liberation Sans', sans-serif;white-space:nowrap;left:1380.3px;letter-spacing:-0.17px;">Text und Schriftart (Umschalt+Strg+T)</div>
<svg style="position:absolute;left:1814px;top:147px;" width="13" height="13" viewBox="0 0 13 13"><rect x="0.5" y="0.5" width="12" height="12" rx="2" fill="#f4f4f4" stroke="#888"/><path d="M9 3 L4 6.5 L9 10 Z" fill="#666"/></svg>
<svg style="position:absolute;left:1850px;top:147px;" width="13" height="13" viewBox="0 0 13 13"><rect x="0.5" y="0.5" width="12" height="12" rx="2" fill="#f4f4f4" stroke="#888"/><path d="M3.5 3.5 L9.5 9.5 M9.5 3.5 L3.5 9.5" stroke="#555" stroke-width="1.8"/></svg>
<div style="position:absolute;left:1363px;top:176px;width:512px;height:448px;background:#ffffff;"></div>
<div style="position:absolute;left:1363.5px;top:176px;width:1px;height:448px;background:#dcd8d4;"></div>
<div style="position:absolute;left:1874px;top:176px;width:1px;height:448px;background:#dcd8d4;"></div>
<div style="position:absolute;left:1367px;top:179.5px;width:504px;height:394px;box-sizing:border-box;border:1px solid #d8d4d0;background:#fff;"></div>
<div style="position:absolute;left:1368px;top:180.5px;width:502px;height:36px;background:#e1dedb;"></div>
<div style="position:absolute;left:1368px;top:216px;width:502px;height:1px;background:#d8d4d0;"></div>
<div style="position:absolute;left:1376px;top:213px;width:66px;height:3.6px;background:#3584e4;"></div>
<div style="position:absolute;top:191.00px;font-size:15px;line-height:15px;color:#2e3436;font-family:'Liberation Sans', sans-serif;white-space:nowrap;left:1388.5px;letter-spacing:-0.2px;">Schrift</div>
<div style="position:absolute;top:191.00px;font-size:15px;line-height:15px;color:#2e3436;font-family:'Liberation Sans', sans-serif;white-space:nowrap;left:1463px;letter-spacing:-0.32px;">Eigenschaften</div>
<div style="position:absolute;top:191.00px;font-size:15px;line-height:15px;color:#2e3436;font-family:'Liberation Sans', sans-serif;white-space:nowrap;left:1588.5px;">Text</div>
<div style="position:absolute;left:1372px;top:231px;width:202px;height:222.5px;box-sizing:border-box;border:1px solid #d0cac5;background:#fff;"></div>
<div style="position:absolute;left:1372px;top:224px;width:88px;height:12px;background:#fff;"></div>
<div style="position:absolute;top:223.80px;font-size:15px;line-height:15px;color:#2e3436;font-family:'Liberation Sans', sans-serif;white-space:nowrap;left:1372.5px;">Schriftfamilie</div>
<div style="position:absolute;left:1426px;top:242px;width:3px;height:1.5px;background:#222;"></div>
<svg style="position:absolute;left:1467px;top:240px;" width="25" height="7" viewBox="0 0 25 7"><path d="M1 0 V5 H23 V0" fill="none" stroke="#666" stroke-width="1.6"/></svg>
<svg style="position:absolute;left:1495px;top:240px;" width="25" height="7" viewBox="0 0 25 7"><path d="M1 0 V5 H23 V0" fill="none" stroke="#666" stroke-width="1.6"/></svg>
<svg style="position:absolute;left:1523px;top:240px;" width="25" height="7" viewBox="0 0 25 7"><path d="M1 0 V5 H23 V0" fill="none" stroke="#666" stroke-width="1.6"/></svg>
<svg style="position:absolute;left:1551px;top:240px;" width="25" height="7" viewBox="0 0 25 7"><path d="M1 0 V5 H23 V0" fill="none" stroke="#666" stroke-width="1.6"/></svg>
<div style="position:absolute;left:1373px;top:232.5px;width:200px;height:220px;overflow:hidden;">
<div style="position:absolute;left:0;top:36.5px;width:200px;height:26px;background:#3584e4;"></div>
<div style="position:absolute;left:4.5px;top:42.80px;font-size:15px;line-height:15px;color:#ffffff;font-family:'Liberation Sans', sans-serif;white-space:nowrap;letter-spacing:-0.2px;">Arial</div>
<div style="position:absolute;left:43px;top:42.80px;font-size:15px;line-height:15px;color:#7f8c9c;font-family:'Liberation Sans', sans-serif;white-space:nowrap;">AaBbCcIiPpQq12369$\'"*</div>
<div style="position:absolute;left:4.5px;top:68.80px;font-size:15px;line-height:15px;color:#000000;font-family:'Liberation Sans', sans-serif;white-space:nowrap;letter-spacing:-0.2px;">Bahnschrift</div>
<div style="position:absolute;left:86px;top:68.80px;font-size:15px;line-height:15px;color:#8a8a8a;font-family:'Liberation Sans', sans-serif;white-space:nowrap;letter-spacing:-0.3px;">AaBbCcIiPpQq12369</div>
<div style="position:absolute;left:4.5px;top:94.80px;font-size:15px;line-height:15px;color:#000000;font-family:'Liberation Sans', sans-serif;white-space:nowrap;letter-spacing:-0.2px;">Book Antiqua</div>
<div style="position:absolute;left:103px;top:94.94px;font-size:15px;line-height:15px;color:#8a8a8a;font-family:'Liberation Serif', serif;white-space:nowrap;">AaBbCcIiPpQq12369</div>
<div style="position:absolute;left:4.5px;top:120.80px;font-size:15px;line-height:15px;color:#000000;font-family:'Liberation Sans', sans-serif;white-space:nowrap;letter-spacing:-0.2px;">Bookman Old Style</div>
<div style="position:absolute;left:139px;top:120.94px;font-size:15px;line-height:15px;color:#8a8a8a;font-family:'Liberation Serif', serif;white-space:nowrap;letter-spacing:0.6px;">AaBbCcIiPpQq12369</div>
<div style="position:absolute;left:4.5px;top:146.80px;font-size:15px;line-height:15px;color:#000000;font-family:'Liberation Sans', sans-serif;white-space:nowrap;letter-spacing:-0.2px;">Bookshelf Symbol 7</div>
<div style="position:absolute;left:144px;top:146.80px;font-size:15px;line-height:15px;color:#8a8a8a;font-family:'Liberation Sans', sans-serif;white-space:nowrap;">AaBbCcIiPpQq12369</div>
<div style="position:absolute;left:4.5px;top:172.80px;font-size:15px;line-height:15px;color:#000000;font-family:'Liberation Sans', sans-serif;white-space:nowrap;letter-spacing:-0.2px;">Bradley Hand ITC</div>
<div style="position:absolute;left:127px;top:172.94px;font-size:15px;line-height:15px;color:#bdbdbd;font-family:'Liberation Serif', serif;white-space:nowrap;font-style:italic;letter-spacing:0px;font-size:14px;">AaBbCcIiPpQq12369</div>
<div style="position:absolute;left:4.5px;top:200.30px;font-size:15px;line-height:15px;color:#000000;font-family:'Liberation Sans', sans-serif;white-space:nowrap;letter-spacing:-0.2px;">Caladea</div>
<div style="position:absolute;left:66.5px;top:200.44px;font-size:15px;line-height:15px;color:#8a8a8a;font-family:'Liberation Serif', serif;white-space:nowrap;letter-spacing:0.1px;">AaBbCcIiPpQq12369</div>
</div>
<div style="position:absolute;left:1578px;top:231px;width:288px;height:185px;box-sizing:border-box;border:1px solid #d0cac5;background:#fff;"></div>
<div style="position:absolute;left:1578px;top:224px;width:27px;height:12px;background:#fff;"></div>
<div style="position:absolute;top:223.80px;font-size:15px;line-height:15px;color:#2e3436;font-family:'Liberation Sans', sans-serif;white-space:nowrap;left:1578.5px;">Stil</div>
<div style="position:absolute;top:247.00px;font-size:15px;line-height:15px;color:#9a9d9d;font-family:'Liberation Sans', sans-serif;white-space:nowrap;font-weight:bold;left:1585px;">CSS</div>
<div style="position:absolute;top:247.00px;font-size:15px;line-height:15px;color:#9a9d9d;font-family:'Liberation Sans', sans-serif;white-space:nowrap;font-weight:bold;left:1738px;">Face</div>
<div style="position:absolute;left:1731px;top:240px;width:1px;height:26px;background:#eeeceb;"></div>
<div style="position:absolute;left:1579px;top:266px;width:286px;height:1px;background:#eeeceb;"></div>
<div style="position:absolute;left:1579px;top:267px;width:286px;height:148px;overflow:hidden;">
<div style="position:absolute;left:4px;top:5.50px;font-size:15px;line-height:15px;color:#000;font-family:'Liberation Sans', sans-serif;white-space:nowrap;letter-spacing:-0.25px;">Condensed</div>
<div style="position:absolute;left:157px;top:5.50px;font-size:15px;line-height:15px;color:#000;font-family:'Liberation Sans', sans-serif;white-space:nowrap;letter-spacing:-0.2px;">Narrow</div>
<div style="position:absolute;left:0;top:26px;width:286px;height:26px;background:#3584e4;"></div>
<div style="position:absolute;left:4px;top:31.50px;font-size:15px;line-height:15px;color:#fff;font-family:'Liberation Sans', sans-serif;white-space:nowrap;letter-spacing:-0.25px;">Normal</div>
<div style="position:absolute;left:157px;top:31.50px;font-size:15px;line-height:15px;color:#fff;font-family:'Liberation Sans', sans-serif;white-space:nowrap;">Regular</div>
<div style="position:absolute;left:4px;top:57.50px;font-size:15px;line-height:15px;color:#000;font-family:'Liberation Sans', sans-serif;white-space:nowrap;letter-spacing:-0.25px;">Italic Condensed</div>
<div style="position:absolute;left:157px;top:57.50px;font-size:15px;line-height:15px;color:#000;font-family:'Liberation Sans', sans-serif;white-space:nowrap;font-style:italic;letter-spacing:-0.3px;">Narrow Italic</div>
<div style="position:absolute;left:4px;top:83.50px;font-size:15px;line-height:15px;color:#000;font-family:'Liberation Sans', sans-serif;white-space:nowrap;letter-spacing:-0.25px;">Italic</div>
<div style="position:absolute;left:157px;top:83.50px;font-size:15px;line-height:15px;color:#000;font-family:'Liberation Sans', sans-serif;white-space:nowrap;font-style:italic;">Italic</div>
<div style="position:absolute;left:4px;top:109.50px;font-size:15px;line-height:15px;color:#000;font-family:'Liberation Sans', sans-serif;white-space:nowrap;letter-spacing:-0.25px;">Bold Condensed</div>
<div style="position:absolute;left:157px;top:109.50px;font-size:15px;line-height:15px;color:#000;font-family:'Liberation Sans', sans-serif;white-space:nowrap;font-weight:bold;letter-spacing:-0.3px;">Narrow Bold</div>
<div style="position:absolute;left:4px;top:135.50px;font-size:15px;line-height:15px;color:#000;font-family:'Liberation Sans', sans-serif;white-space:nowrap;letter-spacing:-0.25px;">Bold</div>
<div style="position:absolute;left:157px;top:135.50px;font-size:15px;line-height:15px;color:#000;font-family:'Liberation Sans', sans-serif;white-space:nowrap;font-weight:bold;">Bold</div>
</div>
<div style="position:absolute;top:429.90px;font-size:15px;line-height:15px;color:#2e3436;font-family:'Liberation Sans', sans-serif;white-space:nowrap;left:1578.5px;">Schriftgröße</div>
<div style="position:absolute;left:1663.5px;top:421px;width:202px;height:32.5px;box-sizing:border-box;border:1px solid #cdc7c2;border-radius:5px;background:#fff;"></div>
<div style="position:absolute;left:1830px;top:422px;width:35px;height:30.5px;background:linear-gradient(#f6f5f4,#edebe9);border-left:1px solid #dcd8d4;border-radius:0 4px 4px 0;"></div>
<div style="position:absolute;top:429.90px;font-size:15px;line-height:15px;color:#2e3436;font-family:'Liberation Sans', sans-serif;white-space:nowrap;left:1672px;">30</div>
<svg style="position:absolute;left:1842px;top:433px;" width="12" height="8" viewBox="0 0 12 8"><path d="M0.5 0.5 H11.5 L6 6.5 Z" fill="#2e3436"/></svg>
<div style="position:absolute;top:511.88px;font-size:50px;line-height:50px;color:#2e3436;font-family:'Liberation Sans', sans-serif;white-space:nowrap;left:1379.8px;letter-spacing:-0.25px;">AaBbCcIiPpQqÜü1</div>
<div style="position:absolute;top:511.88px;font-size:50px;line-height:50px;color:#2e3436;font-family:'Liberation Sans', sans-serif;white-space:nowrap;left:1808px;letter-spacing:2px;">...</div>
<div style="position:absolute;left:1367.5px;top:582.5px;width:181px;height:33px;box-sizing:border-box;border:1px solid #d8d3ce;border-radius:5px;background:#faf9f8;"></div>
<div style="position:absolute;top:591.80px;font-size:15px;line-height:15px;color:#929595;font-family:'Liberation Sans', sans-serif;white-space:nowrap;left:1384px;letter-spacing:-0.16px;">Als Standard festlegen</div>
<div style="position:absolute;left:1658px;top:582.5px;width:103.5px;height:33px;box-sizing:border-box;border:1px solid #d8d3ce;border-radius:5px;background:#faf9f8;"></div>
<div style="position:absolute;top:591.80px;font-size:15px;line-height:15px;color:#929595;font-family:'Liberation Sans', sans-serif;white-space:nowrap;left:1675.5px;letter-spacing:-0.17px;">Anwenden</div>
<div style="position:absolute;left:1770.5px;top:582.5px;width:97px;height:33px;box-sizing:border-box;border:1px solid #cdc7c2;border-radius:5px;background:linear-gradient(#f8f7f6,#edebe9);box-shadow:0 1px 1px rgba(0,0,0,0.07);"></div>
<div style="position:absolute;top:591.80px;font-size:15px;line-height:15px;color:#2e3436;font-family:'Liberation Sans', sans-serif;white-space:nowrap;left:1787.5px;letter-spacing:-0.42px;">Schließen</div>
<div style="position:absolute;left:1363px;top:623px;width:512px;height:1px;background:#d5d0cb;"></div>
<div style="position:absolute;left:1363.5px;top:624px;width:511.5px;height:33.5px;background:linear-gradient(#f6f5f4,#ebe9e7);border-radius:4px 0 0 0;"></div>
<div style="position:absolute;left:1363px;top:657.5px;width:512px;height:1px;background:#cfc9c4;"></div>
<div style="position:absolute;left:1363.5px;top:658.5px;width:511.5px;height:33px;background:#d6d1cd;border-radius:0 0 0 4px;"></div>
<div style="position:absolute;left:1363px;top:693px;width:512px;height:1px;background:#dcd8d4;"></div>
<svg style="position:absolute;left:1373px;top:633px;" width="17" height="17" viewBox="0 0 17 17"><defs><linearGradient id="FSG1" x1="0" y1="0" x2="1" y2="1"><stop offset="0" stop-color="#ffffff"/><stop offset="1" stop-color="#9a9a9a"/></linearGradient></defs><path d="M0.5 0.5 H16 L14 2.8 H2.8 V14 L0.5 16.5 Z" fill="#000"/><path d="M2.8 2.8 H14 L2.8 14 Z" fill="url(#FSG1)"/><path d="M0.8 16.5 L3 12.5 Q7 8.5 12.5 4 L15 6 Q10 11 5 14.5 Z" fill="#000"/><path d="M3.5 13.5 Q8 9.5 12.8 5.5" stroke="#fff" stroke-width="0.6" fill="none" opacity="0.8"/><path d="M12.5 4 L16.5 0.8 L15 6 Z" fill="#f7b000"/></svg>
<div style="position:absolute;top:633.80px;font-size:15px;line-height:15px;color:#2e3436;font-family:'Liberation Sans', sans-serif;white-space:nowrap;left:1392.5px;letter-spacing:-0.15px;">Füllung und Kontur (Umschalt+Strg+F)</div>
<svg style="position:absolute;left:1851px;top:636px;" width="13" height="9" viewBox="0 0 13 9"><path d="M1 7.5 L6.5 2 L12 7.5" fill="none" stroke="#2e3436" stroke-width="1.6"/></svg>
<svg style="position:absolute;left:1373px;top:667px;" width="17" height="17" viewBox="0 0 17 17"><path d="M0.5 0.5 H16.5 V5 H15.5 Q15 2 12 2 H10 V14 Q10 15.2 12 15.2 V16.5 H5 V15.2 Q7 15.2 7 14 V2 H5 Q2 2 1.5 5 H0.5 Z" fill="#000"/></svg>
<div style="position:absolute;top:668.10px;font-size:15px;line-height:15px;color:#2e3436;font-family:'Liberation Sans', sans-serif;white-space:nowrap;left:1392.5px;letter-spacing:-0.2px;">Text und Schriftart (Umschalt+Strg+T)</div>
<svg style="position:absolute;left:1851px;top:670px;" width="13" height="9" viewBox="0 0 13 9"><path d="M1 7.5 L6.5 2 L12 7.5" fill="none" stroke="#2e3436" stroke-width="1.6"/></svg>
<svg style="position:absolute;left:0px;top:956px;" width="1884" height="21" viewBox="0 0 1884 21"><rect x="0" y="0" width="19" height="21" fill="#fff"/><path d="M0.5 0.5 L18.5 20.5 M18.5 0.5 L0.5 20.5" stroke="#800000" stroke-width="1.6"/><rect x="19" y="0" width="19" height="21" fill="#000000"/><rect x="38" y="0" width="19" height="21" fill="#1a1a1a"/><rect x="57" y="0" width="19" height="21" fill="#333333"/><rect x="76" y="0" width="19" height="21" fill="#4d4d4d"/><rect x="95" y="0" width="19" height="21" fill="#666666"/><rect x="114" y="0" width="19" height="21" fill="#808080"/><rect x="133" y="0" width="19" height="21" fill="#999999"/><rect x="152" y="0" width="19" height="21" fill="#b3b3b3"/><rect x="171" y="0" width="19" height="21" fill="#cccccc"/><rect x="190" y="0" width="19" height="21" fill="#e6e6e6"/><rect x="209" y="0" width="19" height="21" fill="#ececec"/><rect x="228" y="0" width="19" height="21" fill="#f2f2f2"/><rect x="247" y="0" width="19" height="21" fill="#f9f9f9"/><rect x="266" y="0" width="19" height="21" fill="#ffffff"/><rect x="285" y="0" width="19" height="21" fill="#800000"/><rect x="304" y="0" width="19" height="21" fill="#ff0000"/><rect x="323" y="0" width="19" height="21" fill="#808000"/><rect x="342" y="0" width="19" height="21" fill="#ffff00"/><rect x="361" y="0" width="19" height="21" fill="#008000"/><rect x="380" y="0" width="19" height="21" fill="#00ff00"/><rect x="399" y="0" width="19" height="21" fill="#008080"/><rect x="418" y="0" width="19" height="21" fill="#00ffff"/><rect x="437" y="0" width="19" height="21" fill="#000080"/><rect x="456" y="0" width="19" height="21" fill="#0000ff"/><rect x="475" y="0" width="19" height="21" fill="#800080"/><rect x="494" y="0" width="19" height="21" fill="#ff00ff"/><rect x="513" y="0" width="19" height="21" fill="#2b0000"/><rect x="532" y="0" width="19" height="21" fill="#550000"/><rect x="551" y="0" width="19" height="21" fill="#800000"/><rect x="570" y="0" width="19" height="21" fill="#aa0000"/><rect x="589" y="0" width="19" height="21" fill="#d40000"/><rect x="608" y="0" width="19" height="21" fill="#ff0000"/><rect x="627" y="0" width="19" height="21" fill="#ff2a2a"/><rect x="646" y="0" width="19" height="21" fill="#ff5555"/><rect x="665" y="0" width="19" height="21" fill="#ff8080"/><rect x="684" y="0" width="19" height="21" fill="#ffaaaa"/><rect x="703" y="0" width="19" height="21" fill="#ffd5d5"/><rect x="722" y="0" width="19" height="21" fill="#280b0b"/><rect x="741" y="0" width="19" height="21" fill="#501616"/><rect x="760" y="0" width="19" height="21" fill="#782121"/><rect x="779" y="0" width="19" height="21" fill="#a02c2c"/><rect x="798" y="0" width="19" height="21" fill="#c83737"/><rect x="817" y="0" width="19" height="21" fill="#d35f5f"/><rect x="836" y="0" width="19" height="21" fill="#de8787"/><rect x="855" y="0" width="19" height="21" fill="#e9afaf"/><rect x="874" y="0" width="19" height="21" fill="#f4d7d7"/><rect x="893" y="0" width="19" height="21" fill="#241c1c"/><rect x="912" y="0" width="19" height="21" fill="#483737"/><rect x="931" y="0" width="19" height="21" fill="#6c5353"/><rect x="950" y="0" width="19" height="21" fill="#916f6f"/><rect x="969" y="0" width="19" height="21" fill="#ac9393"/><rect x="988" y="0" width="19" height="21" fill="#c8b7b7"/><rect x="1007" y="0" width="19" height="21" fill="#e3dbdb"/><rect x="1026" y="0" width="19" height="21" fill="#2b1100"/><rect x="1045" y="0" width="19" height="21" fill="#552200"/><rect x="1064" y="0" width="19" height="21" fill="#803300"/><rect x="1083" y="0" width="19" height="21" fill="#aa4400"/><rect x="1102" y="0" width="19" height="21" fill="#d45500"/><rect x="1121" y="0" width="19" height="21" fill="#ff6600"/><rect x="1140" y="0" width="19" height="21" fill="#ff7f2a"/><rect x="1159" y="0" width="19" height="21" fill="#ff9955"/><rect x="1178" y="0" width="19" height="21" fill="#ffb380"/><rect x="1197" y="0" width="19" height="21" fill="#ffccaa"/><rect x="1216" y="0" width="19" height="21" fill="#ffe6d5"/><rect x="1235" y="0" width="19" height="21" fill="#28170b"/><rect x="1254" y="0" width="19" height="21" fill="#502d16"/><rect x="1273" y="0" width="19" height="21" fill="#784421"/><rect x="1292" y="0" width="19" height="21" fill="#a05a2c"/><rect x="1311" y="0" width="19" height="21" fill="#c87137"/><rect x="1330" y="0" width="19" height="21" fill="#d38d5f"/><rect x="1349" y="0" width="19" height="21" fill="#deaa87"/><rect x="1368" y="0" width="19" height="21" fill="#e9c6af"/><rect x="1387" y="0" width="19" height="21" fill="#f4e3d7"/><rect x="1406" y="0" width="19" height="21" fill="#241f1c"/><rect x="1425" y="0" width="19" height="21" fill="#483e37"/><rect x="1444" y="0" width="19" height="21" fill="#6c5d53"/><rect x="1463" y="0" width="19" height="21" fill="#917c6f"/><rect x="1482" y="0" width="19" height="21" fill="#ac9d93"/><rect x="1501" y="0" width="19" height="21" fill="#c8beb7"/><rect x="1520" y="0" width="19" height="21" fill="#e3dedb"/><rect x="1539" y="0" width="19" height="21" fill="#2b2200"/><rect x="1558" y="0" width="19" height="21" fill="#554400"/><rect x="1577" y="0" width="19" height="21" fill="#806600"/><rect x="1596" y="0" width="19" height="21" fill="#aa8800"/><rect x="1615" y="0" width="19" height="21" fill="#d4aa00"/><rect x="1634" y="0" width="19" height="21" fill="#ffcc00"/><rect x="1653" y="0" width="19" height="21" fill="#ffd42a"/><rect x="1672" y="0" width="19" height="21" fill="#ffdd55"/><rect x="1691" y="0" width="19" height="21" fill="#ffe680"/><rect x="1710" y="0" width="19" height="21" fill="#ffeeaa"/><rect x="1729" y="0" width="19" height="21" fill="#fff6d5"/><rect x="1748" y="0" width="19" height="21" fill="#28220b"/><rect x="1767" y="0" width="19" height="21" fill="#504416"/><rect x="1786" y="0" width="19" height="21" fill="#786721"/><rect x="1805" y="0" width="19" height="21" fill="#a0892c"/><rect x="1824" y="0" width="19" height="21" fill="#c8ab37"/><rect x="1843" y="0" width="19" height="21" fill="#d3bc5f"/><rect x="1862" y="0" width="19" height="21" fill="#decd87"/><rect x="1881" y="0" width="3" height="21" fill="#e9ddaf"/></svg>
<div style="position:absolute;left:0px;top:977px;width:1884px;height:13px;background:#cecece;"></div>
<div style="position:absolute;left:3px;top:981.5px;width:425px;height:5.5px;background:#7e8383;border-radius:3px;"></div>
<svg style="position:absolute;left:1897px;top:966px;" width="9" height="13" viewBox="0 0 9 13"><path d="M7.5 1 L1.5 6.5 L7.5 12 Z" fill="#2e3436"/></svg>
<div style="position:absolute;top:993.23px;font-size:14.5px;line-height:14.5px;color:#2e3436;font-family:'Liberation Sans', sans-serif;white-space:nowrap;left:2.5px;">Füllung: N/V</div>
<div style="position:absolute;top:1012.73px;font-size:14.5px;line-height:14.5px;color:#2e3436;font-family:'Liberation Sans', sans-serif;white-space:nowrap;left:2.5px;">Kontur:</div>
<div style="position:absolute;top:1012.73px;font-size:14.5px;line-height:14.5px;color:#2e3436;font-family:'Liberation Sans', sans-serif;white-space:nowrap;left:57.5px;">N/V</div>
<div style="position:absolute;top:1002.38px;font-size:15.5px;line-height:15.5px;color:#2e3436;font-family:'Liberation Sans', sans-serif;white-space:nowrap;left:85px;">O:</div>
<div style="position:absolute;left:101.5px;top:991px;width:66.5px;height:38px;box-sizing:border-box;background:#fafaf9;border:1px solid #cdc7c2;border-radius:5px;"></div>
<div style="position:absolute;left:134.5px;top:992px;width:1px;height:36px;background:#e4e0dc;"></div>
<div style="position:absolute;left:151.5px;top:992px;width:1px;height:36px;background:#e4e0dc;"></div>
<div style="position:absolute;top:1001.90px;font-size:15px;line-height:15px;color:#929595;font-family:'Liberation Sans', sans-serif;white-space:nowrap;left:105.5px;letter-spacing:0.5px;">100</div>
<div style="position:absolute;left:138px;top:1010px;width:10px;height:1.5px;background:#d4d4d4;"></div>
<div style="position:absolute;left:155px;top:1010px;width:10px;height:1.5px;background:#d4d4d4;"></div>
<div style="position:absolute;left:159px;top:1005px;width:1.5px;height:10.5px;background:#d4d4d4;"></div>
<div style="position:absolute;left:190px;top:990px;width:1px;height:40px;background:#dcd8d4;"></div>
<svg style="position:absolute;left:199px;top:1000px;" width="22" height="18" viewBox="0 0 22 18"><path d="M1.5 9 Q11 1 20.5 9 Q11 17 1.5 9 Z" fill="#fff" stroke="#111" stroke-width="1.5"/><circle cx="11" cy="9" r="3.6" fill="#111"/><path d="M3 4 L5 6 M7 2.5 L8 4.5 M11 2 V4 M15 2.5 L14 4.5 M19 4 L17 6" stroke="#111" stroke-width="1.1"/></svg>
<svg style="position:absolute;left:237px;top:999px;" width="18" height="20" viewBox="0 0 18 20"><path d="M6 9 V5.5 Q6 2 9.5 2 Q13 2 13 5.5" fill="none" stroke="#222" stroke-width="1.5"/><path d="M3 10 L14.5 8.8 L15.5 17.5 L4 18.7 Z" fill="#f4e27a" stroke="#222" stroke-width="1"/><circle cx="9.3" cy="13.5" r="1.2" fill="#111"/></svg>
<div style="position:absolute;left:265px;top:991px;width:93.5px;height:38px;box-sizing:border-box;border:1px solid #cdc7c2;border-radius:5px;background:linear-gradient(#f8f7f6,#edebe9);"></div>
<div style="position:absolute;top:1004.07px;font-size:13.5px;line-height:13.5px;color:#2e3436;font-family:'Liberation Sans', sans-serif;white-space:nowrap;font-weight:bold;left:277.5px;">•</div>
<div style="position:absolute;top:1004.07px;font-size:13.5px;line-height:13.5px;color:#2e3436;font-family:'Liberation Sans', sans-serif;white-space:nowrap;font-weight:bold;left:284.5px;letter-spacing:-0.8px;">Ebene 1</div>
<svg style="position:absolute;left:336px;top:1007px;" width="11" height="7" viewBox="0 0 11 7"><path d="M0.5 0.5 H10.5 L5.5 6 Z" fill="#2e3436"/></svg>
<div style="position:absolute;top:1002.50px;font-size:15px;line-height:15px;color:#2e3436;font-family:'Liberation Sans', sans-serif;white-space:nowrap;left:360.5px;letter-spacing:1.0px;">Keine Objekte ausgewählt. Klick, Umschalt+Klick, oder Ziehen um Objekte auszuwählen.</div>
<div style="position:absolute;left:1514px;top:990px;width:1px;height:40px;background:#dcd8d4;"></div>
<div style="position:absolute;top:992.30px;font-size:15px;line-height:15px;color:#2e3436;font-family:'Liberation Sans', sans-serif;white-space:nowrap;left:1525px;">X:</div>
<div style="position:absolute;top:1012.30px;font-size:15px;line-height:15px;color:#2e3436;font-family:'Liberation Sans', sans-serif;white-space:nowrap;left:1525px;">Y:</div>
<div style="position:absolute;top:992.30px;font-size:15px;line-height:15px;color:#2e3436;font-family:'Liberation Sans', sans-serif;white-space:nowrap;right:307.5px;letter-spacing:1.5px;">1137,99</div>
<div style="position:absolute;top:1012.30px;font-size:15px;line-height:15px;color:#2e3436;font-family:'Liberation Sans', sans-serif;white-space:nowrap;right:307.5px;letter-spacing:1.5px;">611,96</div>
<div style="position:absolute;top:1002.80px;font-size:15px;line-height:15px;color:#2e3436;font-family:'Liberation Sans', sans-serif;white-space:nowrap;left:1621.5px;">Z:</div>
<div style="position:absolute;left:1644.5px;top:991px;width:110.5px;height:38px;box-sizing:border-box;background:#ffffff;border:1px solid #cdc7c2;border-radius:5px;"></div>
<div style="position:absolute;left:1711.5px;top:992px;width:1px;height:36px;background:#e4e0dc;"></div>
<div style="position:absolute;left:1732.5px;top:992px;width:1px;height:36px;background:#e4e0dc;"></div>
<div style="position:absolute;top:1001.90px;font-size:15px;line-height:15px;color:#2e3436;font-family:'Liberation Sans', sans-serif;white-space:nowrap;left:1178.0px;width:1000px;text-align:center;letter-spacing:1.4px;">68%</div>
<div style="position:absolute;left:1717px;top:1010px;width:10px;height:1.5px;background:#2e3436;"></div>
<div style="position:absolute;left:1739px;top:1010px;width:10px;height:1.5px;background:#2e3436;"></div>
<div style="position:absolute;left:1743px;top:1005px;width:1.5px;height:10.5px;background:#2e3436;"></div>
<div style="position:absolute;top:1002.80px;font-size:15px;line-height:15px;color:#2e3436;font-family:'Liberation Sans', sans-serif;white-space:nowrap;left:1766px;">R:</div>
<div style="position:absolute;left:1788.5px;top:991px;width:121.0px;height:38px;box-sizing:border-box;background:#ffffff;border:1px solid #cdc7c2;border-radius:5px;"></div>
<div style="position:absolute;left:1865.5px;top:992px;width:1px;height:36px;background:#e4e0dc;"></div>
<div style="position:absolute;left:1886.5px;top:992px;width:1px;height:36px;background:#e4e0dc;"></div>
<div style="position:absolute;top:1001.90px;font-size:15px;line-height:15px;color:#2e3436;font-family:'Liberation Sans', sans-serif;white-space:nowrap;left:1327.0px;width:1000px;text-align:center;letter-spacing:1.3px;">0,00°</div>
<div style="position:absolute;left:1871px;top:1010px;width:10px;height:1.5px;background:#2e3436;"></div>
<div style="position:absolute;left:1893px;top:1010px;width:10px;height:1.5px;background:#2e3436;"></div>
<div style="position:absolute;left:1897px;top:1005px;width:1.5px;height:10.5px;background:#2e3436;"></div>
<div style="position:absolute;left:0px;top:1030px;width:1920px;height:50px;background:#d4d4d4;"></div>
<svg style="position:absolute;left:13px;top:1038px;" width="34" height="34" viewBox="0 0 34 34"><path d="M5 8.5 L15.5 7 V16.5 H5 Z M17 6.8 L29 5 V16.5 H17 Z M5 18 H15.5 V27.5 L5 26 Z M17 18 H29 V29 L17 27.3 Z" fill="#000"/></svg>
<svg style="position:absolute;left:73px;top:1038px;" width="34" height="34" viewBox="0 0 34 34"><circle cx="19" cy="14" r="7.5" fill="none" stroke="#000" stroke-width="1.4"/><path d="M13.5 19.5 L5 28" stroke="#000" stroke-width="1.6"/></svg>
<svg style="position:absolute;left:133px;top:1038px;" width="34" height="34" viewBox="0 0 34 34"><path d="M7 6 V8 H18 V6 M7 28 V26 H18 V28" fill="none" stroke="#000" stroke-width="1.3"/><rect x="7" y="11" width="11" height="12" fill="none" stroke="#000" stroke-width="1.3"/><path d="M25 6 V28" stroke="#000" stroke-width="1.3"/><rect x="23.5" y="15.5" width="3" height="3" fill="#000"/></svg>
<svg style="position:absolute;left:197px;top:1038px;" width="34" height="34" viewBox="0 0 34 34"><path d="M3 7 Q3 5 5 5 H12 L14 7 H30 V28 H3 Z" fill="#e8b020"/><rect x="3" y="9" width="27" height="19" fill="#ffd45a"/><path d="M9 28 V18 H24 V28 H20 V22 H13 V28 Z" fill="#3a8ee0"/></svg>
<div style="position:absolute;left:189px;top:1077px;width:51px;height:3px;background:#0f6cbd;"></div>
<svg style="position:absolute;left:258px;top:1038px;" width="34" height="34" viewBox="0 0 34 34"><g fill="#444"><circle cx="17" cy="17" r="8.5"/><g transform="translate(17 17)"><rect x="-2.5" y="-12" width="5" height="24"/><rect x="-2.5" y="-12" width="5" height="24" transform="rotate(45)"/><rect x="-2.5" y="-12" width="5" height="24" transform="rotate(90)"/><rect x="-2.5" y="-12" width="5" height="24" transform="rotate(135)"/></g></g><circle cx="17" cy="17" r="4.5" fill="#d4d4d4"/></svg>
<svg style="position:absolute;left:321px;top:1038px;" width="34" height="34" viewBox="0 0 34 34"><circle cx="17" cy="17" r="14" fill="#e0805a"/><circle cx="17" cy="17" r="14" fill="none" stroke="#b070c0" stroke-width="2" stroke-dasharray="40 60"/><circle cx="17" cy="17" r="12" fill="#222"/><circle cx="17" cy="17" r="5.5" fill="#fff"/><circle cx="17" cy="17" r="2" fill="#222"/></svg>
<svg style="position:absolute;left:383px;top:1038px;" width="34" height="34" viewBox="0 0 34 34"><defs><linearGradient id="ffg" x1="0.8" y1="0" x2="0.2" y2="1"><stop offset="0" stop-color="#fff44f"/><stop offset="0.45" stop-color="#ff980e"/><stop offset="1" stop-color="#ff3750"/></linearGradient><radialGradient id="ffp" cx="0.4" cy="0.35" r="0.7"><stop offset="0" stop-color="#9059ff"/><stop offset="1" stop-color="#5b2bd0"/></radialGradient></defs><circle cx="17" cy="18" r="13.5" fill="url(#ffg)"/><circle cx="16" cy="17.5" r="7.5" fill="url(#ffp)"/><path d="M22 3 Q31 9 30.5 18.5 Q29.5 29 18 31.5 Q8 32 4 23 Q9 28.5 16 27 Q24 25.5 25 17 Q25 9 19 7.5 Q21 5 22 3 Z" fill="url(#ffg)"/><path d="M5 12 Q4 8 6.5 5 Q7 9 10 10.5 Q13 8.5 16 9.5 Q10 10.5 9 15 Q6 14 5 12 Z" fill="#ff8a16"/></svg>
<div style="position:absolute;left:375px;top:1077px;width:51px;height:3px;background:#0f6cbd;"></div>
<svg style="position:absolute;left:444px;top:1038px;" width="34" height="34" viewBox="0 0 34 34"><rect x="3" y="3" width="28" height="28" rx="4" fill="#b30b00"/><path d="M9 24 Q13 19 17 9 Q18 6 17 5 Q15 6 16 11 Q18 17 24 21 Q28 22 27 20 Q24 18 15 20 Q8 23 9 25 Z" fill="none" stroke="#fff" stroke-width="1.3"/></svg>
<svg style="position:absolute;left:507px;top:1038px;" width="34" height="34" viewBox="0 0 34 34"><rect x="9" y="3" width="22" height="28" rx="2" fill="#21a366"/><rect x="9" y="3" width="22" height="9" fill="#33c481"/><rect x="9" y="21" width="22" height="10" fill="#107c41"/><rect x="3" y="9" width="16" height="16" rx="2" fill="#185c37"/><path d="M7 13 L15 21 M15 13 L7 21" stroke="#fff" stroke-width="2.2"/></svg>
<div style="position:absolute;left:499px;top:1077px;width:51px;height:3px;background:#0f6cbd;"></div>
<svg style="position:absolute;left:569px;top:1038px;" width="34" height="34" viewBox="0 0 34 34"><rect x="9" y="3" width="22" height="28" rx="2" fill="#2b7cd3"/><rect x="9" y="3" width="22" height="9" fill="#41a5ee"/><rect x="9" y="21" width="22" height="10" fill="#185abd"/><rect x="3" y="9" width="16" height="16" rx="2" fill="#185abd"/><path d="M5.5 13 L7.5 21 L10 15 L12.5 21 L14.5 13" fill="none" stroke="#fff" stroke-width="1.7"/></svg>
<div style="position:absolute;left:561px;top:1077px;width:42px;height:3px;background:#0f6cbd;"></div>
<div style="position:absolute;left:603px;top:1077px;width:9px;height:3px;background:#62a8e8;"></div>
<svg style="position:absolute;left:630px;top:1038px;" width="34" height="34" viewBox="0 0 34 34"><path d="M4 5 H22 L27 10 V30 H4 Z" fill="#e8f4e0" stroke="#888"/><path d="M5 14 Q12 10 20 16 Q24 22 18 26 Q10 29 6 24 Z" fill="#50b030"/><path d="M26 3 L30 5 L20 26 L17 27 L18 24 Z" fill="#f0b020" stroke="#804000" stroke-width="0.6"/></svg>
<svg style="position:absolute;left:692px;top:1038px;" width="34" height="34" viewBox="0 0 34 34"><path d="M6 3 H23 L28 8 V31 H6 Z" fill="#fff" stroke="#e0a820" stroke-width="2"/><path d="M23 3 H28 V8 Z" fill="#e0a820"/><circle cx="14" cy="16" r="5" fill="#f8c8b0" stroke="#e08a60"/><rect x="16" y="15" width="8" height="8" fill="#a8d8f8" stroke="#3a90d0"/><path d="M9 25 L13 19 L17 25 Z" fill="#f8e8a0" stroke="#e0a820"/></svg>
<svg style="position:absolute;left:754px;top:1038px;" width="34" height="34" viewBox="0 0 34 34"><rect x="3" y="3" width="28" height="28" rx="2" fill="#ee5a24"/><path d="M9.5 11 H19 M9.5 11 V25 H24 V15" fill="none" stroke="#fff" stroke-width="2.6"/><rect x="21" y="7.5" width="3.5" height="3.5" fill="#fff"/></svg>
<div style="position:absolute;left:804px;top:1030px;width:57px;height:50px;background:#e9e9e9;"></div>
<div style="position:absolute;left:861px;top:1030px;width:1px;height:50px;background:#a8a8a8;"></div>
<div style="position:absolute;left:804px;top:1077px;width:57px;height:3px;background:#0f6cbd;"></div>
<div style="position:absolute;left:861px;top:1077px;width:3px;height:3px;background:#62a8e8;"></div>
<svg style="position:absolute;left:816px;top:1038px;" width="34" height="34" viewBox="0 0 34 34"><g transform="scale(1.7)"><defs><linearGradient id="lg_tb" x1="0" y1="0" x2="0" y2="1"><stop offset="0" stop-color="#5a5a5a"/><stop offset="0.45" stop-color="#000"/></linearGradient></defs><path d="M10 0.8 L1.2 9.6 Q0.4 10.9 2.2 11.4 L6.2 12.2 Q4.8 13.8 6.4 14.4 L8.8 14.1 Q8.3 16.2 10 16.6 L11.3 14.6 Q13.3 15.6 14.2 14.1 L13.6 12.7 L17.8 11.4 Q19.6 10.9 18.8 9.6 Z" fill="url(#lg_tb)"/><path d="M10 1.2 L5 6.2 Q7.5 7.4 9.2 6 L10 7 L11.2 5.8 Q13 7.2 15 6.2 Z" fill="#fff" opacity="0.92"/><circle cx="4.6" cy="16.6" r="1.1" fill="#000"/><circle cx="15.8" cy="16.2" r="1.2" fill="#000"/><circle cx="12.6" cy="18.6" r="0.9" fill="#000"/><ellipse cx="8" cy="18.3" rx="1.6" ry="0.8" fill="#000"/></g></svg>
<svg style="position:absolute;left:879px;top:1038px;" width="34" height="34" viewBox="0 0 34 34"><g transform="translate(17 17)"><path d="M0 0 L0 -14 A14 14 0 0 1 12.1 -7 Z" fill="#f07820"/><path d="M0 0 L12.1 -7 A14 14 0 0 1 12.1 7 Z" fill="#f8d800"/><path d="M0 0 L12.1 7 A14 14 0 0 1 0 14 Z" fill="#30a030"/><path d="M0 0 L0 14 A14 14 0 0 1 -12.1 7 Z" fill="#2060d0"/><path d="M0 0 L-12.1 7 A14 14 0 0 1 -12.1 -7 Z" fill="#b030c0"/><path d="M0 0 L-12.1 -7 A14 14 0 0 1 0 -14 Z" fill="#d02030"/><g stroke="#111" stroke-width="1.3"><path d="M1.5 -1.5 L4.3 -13.2"/><path d="M1.5 -1.5 L4.3 -13.2" transform="rotate(60)"/><path d="M1.5 -1.5 L4.3 -13.2" transform="rotate(120)"/><path d="M1.5 -1.5 L4.3 -13.2" transform="rotate(180)"/><path d="M1.5 -1.5 L4.3 -13.2" transform="rotate(240)"/><path d="M1.5 -1.5 L4.3 -13.2" transform="rotate(300)"/></g><circle r="2.6" fill="#fff"/></g></svg>
<svg style="position:absolute;left:940px;top:1038px;" width="34" height="34" viewBox="0 0 34 34"><defs><radialGradient id="gmp" cx="0.4" cy="0.3" r="0.8"><stop offset="0" stop-color="#a09884"/><stop offset="1" stop-color="#5a5244"/></radialGradient></defs><path d="M6 17 Q7 11 13 11 Q15 7 18 9 Q21 10 24 5 Q28 3 27 10 Q26 15 24 17 Q24 23 17 24 Q9 25 6 17 Z" fill="url(#gmp)"/><circle cx="12.5" cy="14.5" r="3" fill="#fff" stroke="#444" stroke-width="0.6"/><circle cx="18.5" cy="13.5" r="3" fill="#fff" stroke="#444" stroke-width="0.6"/><circle cx="12.8" cy="14.5" r="1.4" fill="#111"/><circle cx="18.8" cy="13.5" r="1.4" fill="#111"/><circle cx="6.5" cy="17.5" r="2.6" fill="#111"/><path d="M17 21 L28 28" stroke="#e08a30" stroke-width="1.8"/><path d="M27 27.3 L31 30" stroke="#333" stroke-width="2"/></svg>
<svg style="position:absolute;left:1002px;top:1038px;" width="34" height="34" viewBox="0 0 34 34"><defs><linearGradient id="gep" x1="0" y1="0" x2="1" y2="1"><stop offset="0" stop-color="#ffffff"/><stop offset="1" stop-color="#c8ccd4"/></linearGradient></defs><circle cx="17" cy="16" r="14" fill="url(#gep)"/><path d="M3.5 13 Q10 7 18 10 Q25 13 30 8" fill="none" stroke="#8a94ac" stroke-width="3.4"/><path d="M3.5 21 Q11 15 19 18.5 Q26 21 31 16" fill="none" stroke="#8a94ac" stroke-width="3.4"/><rect x="9" y="23" width="16" height="8.5" rx="2" fill="#2a2a2a"/><text x="17" y="30" font-family="Liberation Sans" font-size="7.5" fill="#ddd" text-anchor="middle">Pro</text></svg>
<svg style="position:absolute;left:1064px;top:1038px;" width="34" height="34" viewBox="0 0 34 34"><path d="M14 5 Q5 8 5 18 Q6 28 15 28 Q17 31 22 31 L24 29 Q20 29 19 27 Q26 24 26 15 Q25 5 14 5 Z M15 9 Q10 10 10 17 Q10 24 15 24 Q20 23 21 16 Q21 9 15 9 Z" fill="#eef070" stroke="#707a20" stroke-width="0.8" fill-rule="evenodd"/><path d="M8 28 L26 6" stroke="#1a9a20" stroke-width="2.4"/><path d="M22 4.5 L28.5 2.5 L27 9.5 Z" fill="#1a9a20"/><path d="M5 29 L10 24 L9 30 Z" fill="#1a7a20"/></svg>
<svg style="position:absolute;left:1127px;top:1038px;" width="34" height="34" viewBox="0 0 34 34"><defs><radialGradient id="glb" cx="0.35" cy="0.3" r="0.8"><stop offset="0" stop-color="#90c0ff"/><stop offset="0.6" stop-color="#2050c0"/><stop offset="1" stop-color="#102080"/></radialGradient></defs><ellipse cx="17" cy="29.5" rx="12" ry="2.2" fill="#2020a0"/><circle cx="17" cy="16" r="13" fill="url(#glb)"/><path d="M13 7 Q18 5 21 9 Q19 13 16 12 Q12 11 13 7 Z M20 15 Q25 14 26 19 Q23 23 20 21 Z" fill="#e8d8a8" opacity="0.85"/><path d="M27 4 L14 21" stroke="#444" stroke-width="2.5"/><path d="M15 19 L9 27 L12 28.5 L18 22 Z" fill="#666" stroke="#222" stroke-width="0.6"/></svg>
<svg style="position:absolute;left:1189px;top:1038px;" width="34" height="34" viewBox="0 0 34 34"><circle cx="17" cy="17" r="14.5" fill="#1e7ad0"/><path d="M17 6 L18.5 13 L28 18 V20 L18.5 17 L18 25 L21 27 V28.5 L17 27.5 L13 28.5 V27 L16 25 L15.5 17 L6 20 V18 L15.5 13 Z" fill="#fff"/><text x="9" y="12" font-family="Liberation Sans" font-size="7" fill="#fff">X</text><text x="22" y="12" font-family="Liberation Sans" font-size="7" fill="#fff">O</text></svg>
<svg style="position:absolute;left:1251px;top:1038px;" width="34" height="34" viewBox="0 0 34 34"><circle cx="17" cy="17" r="14.5" fill="#0a2a3a"/><path d="M6 7 L14 17 L6 27 H12 L17 20 L22 27 H30 L21 17 L30 7 H24 L17 14 L12 7 Z" fill="#3ab0e8"/></svg>
<svg style="position:absolute;left:1313px;top:1038px;" width="34" height="34" viewBox="0 0 34 34"><path d="M4 10 L30 24 M3 13 L29 27" stroke="#d02020" stroke-width="2"/><path d="M10 20 L22 14 L26 16 L14 24 Z" fill="#c81818"/><path d="M18 9 L20 22" stroke="#d02020" stroke-width="1.5"/></svg>
<svg style="position:absolute;left:1375px;top:1038px;" width="34" height="34" viewBox="0 0 34 34"><defs><linearGradient id="afg" x1="0" y1="0" x2="0" y2="1"><stop offset="0" stop-color="#1a5ad0"/><stop offset="0.6" stop-color="#0a3a9a"/><stop offset="1" stop-color="#061e60"/></linearGradient></defs><rect x="2" y="2" width="30" height="30" rx="3" fill="url(#afg)"/><path d="M5 21 Q13 17 22 13 Q28 10 31 11 Q30 14 24 17 Q15 21 7 23 Z" fill="#f4f6fa"/><path d="M12 19 L6 8 L9 8 L18 16 Z" fill="#e8ecf4"/><path d="M13 20 L4 30 L7 30 L19 19 Z" fill="#e8ecf4"/><ellipse cx="24" cy="14" rx="3" ry="1.5" fill="#556" transform="rotate(-25 24 14)"/></svg>
<svg style="position:absolute;left:1438px;top:1038px;" width="34" height="34" viewBox="0 0 34 34"><defs><linearGradient id="ccg" x1="0" y1="0" x2="1" y2="1"><stop offset="0" stop-color="#f05a40"/><stop offset="1" stop-color="#b81a10"/></linearGradient></defs><path d="M29 7.5 Q24 2.5 17.5 3 Q6 4 5.5 17 Q6 29 17.5 30.5 Q24.5 31 29.5 25.5 L25 21 Q22 25 17.5 25 Q11.5 24.5 11.5 17 Q12 9 17.5 8.5 Q21.5 8.5 24.5 12 Z" fill="url(#ccg)"/><path d="M20 3.5 L14 17" stroke="#2a6ad0" stroke-width="2.2"/><path d="M11 15 L17.5 18.5 L15 29 Q9 29 5 25 Z" fill="#f4d8a0" stroke="#c8a060" stroke-width="0.6"/><path d="M8 21 L15 27 M10 19 L16 24" stroke="#d8b070" stroke-width="0.6"/></svg>
<div style="position:absolute;left:1650px;top:1041.5px;width:58px;height:25px;background:#fff;"></div>
<div style="position:absolute;left:1653px;top:1044.5px;width:52px;height:19px;background:#1b9a4b;"></div>
<div style="position:absolute;left:1708px;top:1050px;width:3px;height:9px;background:#fff;"></div>
<div style="position:absolute;top:1047.11px;font-size:17px;line-height:17px;color:#ffffff;font-family:'Liberation Sans', sans-serif;white-space:nowrap;left:1179px;width:1000px;text-align:center;">96%</div>
<svg style="position:absolute;left:1718px;top:1043px;" width="16" height="24" viewBox="0 0 16 24"><path d="M3 5 V1 M8 5 V1" stroke="#fff" stroke-width="2"/><path d="M1 5 H10 V12 Q10 16 5.5 16 Q1 16 1 12 Z" fill="#fff"/><path d="M5.5 16 V22" stroke="#fff" stroke-width="2"/></svg>
<svg style="position:absolute;left:1743px;top:1047px;" width="20" height="12" viewBox="0 0 20 12"><path d="M2 10 L10 2 L18 10" fill="none" stroke="#111" stroke-width="1.3"/></svg>
<div style="position:absolute;top:1037.65px;font-size:14px;line-height:14px;color:#111;font-family:'Liberation Sans', sans-serif;white-space:nowrap;left:1311px;width:1000px;text-align:center;">19:52</div>
<div style="position:absolute;top:1059.65px;font-size:14px;line-height:14px;color:#111;font-family:'Liberation Sans', sans-serif;white-space:nowrap;left:1311px;width:1000px;text-align:center;">09.11.2020</div>
<svg style="position:absolute;left:1868px;top:1043px;" width="24" height="24" viewBox="0 0 24 24"><path d="M2.5 2.5 H21.5 V17.5 H13.5 L12 19.5 L10.5 17.5 H2.5 Z" fill="none" stroke="#111" stroke-width="1.3"/></svg>
<div style="position:absolute;left:1914px;top:1030px;width:1px;height:50px;background:#b8b8b8;"></div>
</body></html>
